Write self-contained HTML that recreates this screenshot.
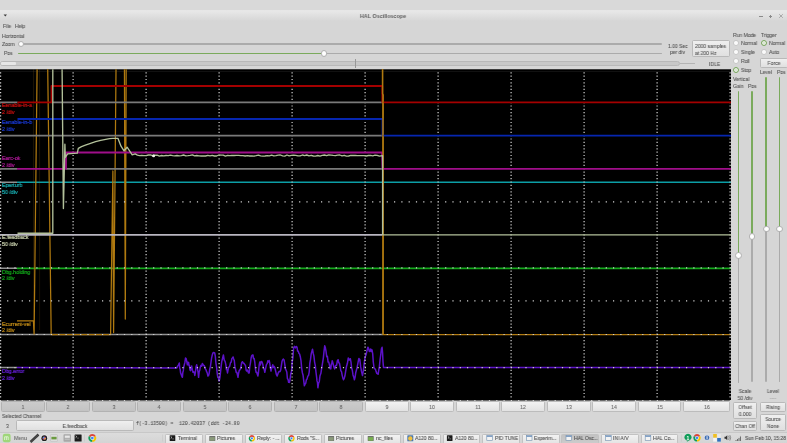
<!DOCTYPE html>
<html><head><meta charset="utf-8"><style>
*{margin:0;padding:0;box-sizing:border-box}
html,body{width:787px;height:443px;overflow:hidden;background:#d6d6d6;font-family:"Liberation Sans",sans-serif;color:#505050}
.r{position:absolute}
.t{position:absolute;white-space:nowrap;will-change:transform;-webkit-text-stroke:0.08px currentColor}
</style></head><body>
<div class="r" style="left:0.00px;top:0.00px;width:787.00px;height:9.70px;background:#d9d9d9"></div>
<div class="r" style="left:0.00px;top:9.70px;width:787.00px;height:11.30px;background:linear-gradient(#e6e6e6 0%,#e8e8e8 10%,#dedede 60%,#d6d6d6 100%)"></div>
<svg class="r" style="left:0;top:10px" width="12" height="10"><path d="M3.6,4.6 L7.0,4.6 L5.3,6.6 Z" fill="#383838"/></svg>
<div class="t" style="left:323.00px;width:120px;text-align:center;top:13.94px;font-size:5.83px;line-height:5.83px;color:#5e5e5e;font-weight:bold;font-family:'Liberation Sans';transform-origin:50% 50%;transform:scaleX(0.9259);-webkit-text-stroke:0">HAL Oscilloscope</div>
<div class="r" style="left:759.00px;top:16.30px;width:3.60px;height:0.60px;background:#8a8a8a"></div>
<div class="r" style="left:768.90px;top:16.30px;width:3.60px;height:0.60px;background:#8a8a8a"></div>
<div class="r" style="left:770.40px;top:14.60px;width:0.60px;height:3.90px;background:#8a8a8a"></div>
<svg class="r" style="left:778px;top:13.4px" width="6" height="6"><path d="M1.2,1.2L4.8,4.8M4.8,1.2L1.2,4.8" stroke="#8a8a8a" stroke-width="0.65"/></svg>
<div class="t" style="left:2.50px;top:24.00px;font-size:5.40px;line-height:5.40px;color:#525252;font-weight:normal;font-family:'Liberation Sans';transform-origin:0 50%;transform:scaleX(0.9259);">File</div>
<div class="t" style="left:15.00px;top:24.00px;font-size:5.40px;line-height:5.40px;color:#525252;font-weight:normal;font-family:'Liberation Sans';transform-origin:0 50%;transform:scaleX(0.9259);">Help</div>
<div class="t" style="left:2.00px;top:34.00px;font-size:5.40px;line-height:5.40px;color:#525252;font-weight:normal;font-family:'Liberation Sans';transform-origin:0 50%;transform:scaleX(0.9259);">Horizontal</div>
<div class="t" style="left:2.00px;top:42.00px;font-size:5.40px;line-height:5.40px;color:#525252;font-weight:normal;font-family:'Liberation Sans';transform-origin:0 50%;transform:scaleX(0.9259);">Zoom</div>
<div class="t" style="left:4.00px;top:51.00px;font-size:5.40px;line-height:5.40px;color:#525252;font-weight:normal;font-family:'Liberation Sans';transform-origin:0 50%;transform:scaleX(0.9259);">Pos</div>
<div class="r" style="left:20.00px;top:42.90px;width:641.70px;height:1.70px;background:#ababab;border-radius:1px"></div>
<div class="r" style="left:17.50px;top:40.50px;width:6.80px;height:6.80px;border-radius:50%;background:radial-gradient(circle at 50% 45%,#ffffff 40%,#ededed);border:0.7px solid #b4b4b4"></div>
<div class="r" style="left:18.00px;top:52.50px;width:306.00px;height:1.90px;background:#7aaa5c;border-radius:1px"></div>
<div class="r" style="left:324.00px;top:52.50px;width:337.70px;height:1.90px;background:#ababab;border-radius:1px"></div>
<div class="r" style="left:320.70px;top:50.00px;width:6.80px;height:6.80px;border-radius:50%;background:radial-gradient(circle at 50% 45%,#ffffff 40%,#ededed);border:0.7px solid #b4b4b4"></div>
<div class="t" style="left:667.80px;top:43.60px;font-size:5.40px;line-height:5.40px;color:#525252;font-weight:normal;font-family:'Liberation Sans';transform-origin:0 50%;transform:scaleX(0.9259);">1.00 Sec</div>
<div class="t" style="left:670.00px;top:50.30px;font-size:5.40px;line-height:5.40px;color:#525252;font-weight:normal;font-family:'Liberation Sans';transform-origin:0 50%;transform:scaleX(0.9259);">per div</div>
<div class="r" style="left:692.00px;top:40.00px;width:38.00px;height:17.30px;border:0.8px solid #b9b9b9;border-radius:1.5px;background:linear-gradient(#efefef,#e0e0e0);"></div>
<div class="t" style="left:695.00px;top:43.60px;font-size:5.40px;line-height:5.40px;color:#525252;font-weight:normal;font-family:'Liberation Sans';transform-origin:0 50%;transform:scaleX(0.9259);">2000 samples</div>
<div class="t" style="left:695.00px;top:50.50px;font-size:5.40px;line-height:5.40px;color:#525252;font-weight:normal;font-family:'Liberation Sans';transform-origin:0 50%;transform:scaleX(0.9259);">at 200 Hz</div>
<div class="r" style="left:0.00px;top:61.00px;width:680.00px;height:5.00px;border:0.7px solid #b8b8b8;border-radius:2.5px;background:#c8c8c8"></div>
<div class="r" style="left:1.20px;top:62.40px;width:14.80px;height:2.40px;background:#e6e6e6;border-radius:1px"></div>
<div class="r" style="left:680.00px;top:62.90px;width:15.00px;height:0.90px;background:#b4b4b4"></div>
<div class="r" style="left:355.30px;top:59.00px;width:0.80px;height:9.00px;background:#989898"></div>
<div class="t" style="left:709.00px;top:62.00px;font-size:5.40px;line-height:5.40px;color:#525252;font-weight:normal;font-family:'Liberation Sans';transform-origin:0 50%;transform:scaleX(0.9259);">IDLE</div>
<svg class="r" style="left:0;top:0" width="787" height="443" viewBox="0 0 787 443">
<defs><clipPath id="sc"><rect x="0" y="69.3" width="731" height="332"/></clipPath></defs>
<rect x="0" y="69.3" width="731" height="331.2" fill="#000"/>
<rect x="0" y="69.3" width="731" height="0.6" fill="#3a3a3a"/>
<rect x="0" y="71.2" width="731" height="0.5" fill="#222"/>
<g clip-path="url(#sc)">
<polyline points="0.0,334.6 383.0,334.6" fill="none" stroke="#909090" stroke-width="1.5" stroke-opacity="1" stroke-linejoin="round"/><polyline points="0.0,367.6 17.0,367.6" fill="none" stroke="#909090" stroke-width="1.5" stroke-opacity="1" stroke-linejoin="round"/><polyline points="0.0,182.3 17.0,182.3" fill="none" stroke="#909090" stroke-width="1.6" stroke-opacity="1" stroke-linejoin="round"/><polyline points="17.0,182.3 731.0,182.3" fill="none" stroke="#0c9ea6" stroke-width="1.6" stroke-opacity="1" stroke-linejoin="round"/><polyline points="0.0,268.3 17.0,268.3" fill="none" stroke="#909090" stroke-width="1.6" stroke-opacity="1" stroke-linejoin="round"/><polyline points="17.0,268.3 731.0,268.3" fill="none" stroke="#12a81a" stroke-width="1.7" stroke-opacity="1" stroke-linejoin="round"/><polyline points="17.0,320.8 33.4,320.8 34.1,334.0 34.6,290.0 37.2,60.0 47.6,60.0 51.2,334.6 110.6,334.6 112.9,171.0 113.6,332.6 116.1,60.0 124.4,60.0 125.3,319.0 126.2,60.0 382.5,60.0 382.5,93.7 383.2,95.0 383.2,334.6 731.0,334.6" fill="none" stroke="#b07a10" stroke-width="1.25" stroke-opacity="1" stroke-linejoin="round"/><polyline points="33.5,60.0 33.5,330.0" fill="none" stroke="#b07a10" stroke-width="0.8" stroke-opacity="0.2" stroke-linejoin="round"/><polyline points="39.6,60.0 39.6,330.0" fill="none" stroke="#b07a10" stroke-width="0.8" stroke-opacity="0.2" stroke-linejoin="round"/><polyline points="17.0,367.6 176.8,368.0 177.6,366.1 178.5,364.9 179.3,363.0 179.7,368.1 180.2,369.5 180.6,372.9 181.2,374.4 181.8,376.2 182.4,377.3 182.8,372.6 183.3,370.7 183.7,367.3 184.3,364.8 184.9,362.4 185.5,358.0 186.1,358.5 186.8,361.7 187.4,364.8 187.8,362.2 188.2,364.6 188.6,362.4 189.0,365.7 189.5,365.3 189.9,369.8 190.5,370.7 191.1,369.3 191.7,366.0 192.1,368.8 192.6,370.7 193.0,372.3 193.6,371.8 194.2,372.2 194.8,375.4 195.4,372.0 196.1,366.4 196.7,364.8 197.3,367.6 198.0,372.0 198.6,377.3 199.2,371.7 199.8,370.0 200.4,366.7 201.0,365.4 201.7,366.1 202.3,363.6 202.9,364.3 203.6,365.5 204.2,365.5 204.8,366.9 205.4,369.1 206.0,369.8 206.6,371.7 207.3,373.0 207.9,376.0 208.5,375.7 209.2,373.2 209.8,368.6 210.4,366.6 211.0,362.4 211.6,358.0 212.2,355.3 212.9,353.1 213.5,352.4 214.1,352.7 214.7,353.0 215.3,356.1 215.9,363.0 216.6,367.3 217.2,373.5 217.8,377.5 218.5,378.0 219.1,381.0 219.7,378.9 220.3,374.2 220.9,368.6 221.7,361.9 222.6,358.1 223.4,354.9 224.2,360.0 225.1,361.4 225.9,364.8 226.4,369.6 227.0,369.8 227.5,372.9 228.5,367.6 229.6,366.4 230.6,362.4 231.2,362.2 231.9,358.4 232.5,358.0 233.1,357.0 233.7,358.9 234.3,360.5 234.9,366.4 235.6,369.5 236.2,372.3 236.8,372.3 237.4,374.5 238.0,377.3 238.6,373.1 239.3,370.3 239.9,369.8 240.7,368.4 241.6,363.0 242.4,361.7 243.2,363.0 244.1,363.5 244.9,364.8 245.5,365.5 246.1,370.0 246.7,371.0 247.5,370.0 248.4,372.9 249.2,372.9 249.8,366.3 250.5,362.6 251.1,358.0 251.7,355.7 252.4,354.9 253.0,354.9 253.4,358.2 253.8,358.7 254.2,358.6 254.8,362.3 255.5,369.5 256.1,372.3 256.7,372.2 257.3,374.3 257.9,376.0 258.3,373.9 258.8,369.1 259.2,364.8 259.8,362.0 260.4,364.9 261.0,361.7 261.6,361.5 262.3,362.7 262.9,364.8 263.5,368.5 264.2,369.1 264.8,372.3 265.6,368.5 266.4,364.6 267.2,363.6 267.8,360.8 268.5,361.9 269.1,360.5 269.7,362.8 270.4,368.0 271.0,371.0 271.6,368.4 272.2,366.6 272.8,364.8 273.4,367.6 274.1,366.4 274.7,367.3 275.5,370.5 276.4,374.7 277.2,376.0 278.1,373.2 279.1,371.5 280.0,371.6 280.7,370.0 281.3,366.2 282.0,361.4 282.7,359.8 283.4,359.1 284.1,360.0 284.8,364.4 285.4,368.8 286.1,370.2 286.8,372.0 287.4,378.5 288.1,379.7 288.6,382.3 289.0,382.0 289.5,382.4 290.2,378.5 290.8,373.4 291.5,371.6 292.2,361.7 292.9,357.8 293.6,347.9 294.5,346.3 295.4,347.9 296.3,346.5 297.0,347.0 297.6,351.1 298.3,351.3 299.0,353.5 299.6,354.0 300.3,356.7 301.0,360.6 301.7,368.5 302.4,372.9 303.1,375.3 303.7,380.3 304.4,385.8 305.1,384.0 305.7,383.3 306.4,379.7 307.1,378.9 307.8,376.1 308.5,375.7 309.2,372.2 309.8,363.5 310.5,359.4 311.2,353.9 311.8,351.6 312.5,349.2 313.2,353.2 313.9,355.9 314.6,362.1 315.3,365.6 315.9,371.5 316.6,377.0 317.0,380.9 317.5,382.6 317.9,387.8 318.6,383.2 319.3,381.4 320.0,375.7 320.9,373.3 321.8,367.3 322.7,362.1 323.4,357.6 324.0,351.6 324.7,345.8 325.4,347.8 326.0,351.1 326.7,356.7 327.4,356.4 328.1,362.1 328.8,362.1 329.5,365.2 330.1,368.7 330.8,368.9 331.3,364.1 331.7,364.0 332.2,360.7 333.0,363.3 333.9,367.2 334.7,368.9 335.6,365.4 336.5,365.6 337.4,360.7 338.1,359.7 338.8,362.7 339.5,363.4 340.2,367.1 340.8,370.7 341.5,371.6 342.2,375.3 342.8,377.9 343.5,379.7 344.2,378.3 344.9,376.1 345.6,371.6 346.5,366.5 347.4,363.3 348.3,358.0 349.0,360.0 349.6,360.1 350.3,358.7 351.0,362.1 351.6,367.7 352.3,370.2 353.0,374.9 353.7,376.9 354.4,379.7 355.1,377.1 355.7,372.8 356.4,370.2 357.1,367.4 357.7,364.3 358.4,360.7 358.9,358.4 359.3,360.4 359.8,359.4 360.7,366.9 361.6,371.9 362.5,375.6 363.4,370.4 364.3,362.4 365.2,356.7 366.1,354.6 367.0,350.7 367.9,347.2 368.6,348.3 369.3,351.4 370.0,351.3 370.7,349.0 371.3,351.5 372.0,349.9 372.7,353.6 373.3,362.1 374.0,367.5 374.7,368.8 375.4,369.1 376.1,371.6 376.8,373.4 377.4,373.4 378.1,374.3 378.8,369.9 379.4,366.2 380.1,359.4 380.8,354.3 381.4,349.1 382.1,347.2 382.6,353.0 383.0,361.6 383.5,367.5 731.0,367.6" fill="none" stroke="#5c12c8" stroke-width="1.5" stroke-opacity="1" stroke-linejoin="round"/>
<path d="M0.0,72.3h1.2v1.2h-1.2z M0.0,75.6h1.2v1.2h-1.2z M0.0,78.9h1.2v1.2h-1.2z M0.0,82.2h1.2v1.2h-1.2z M0.0,85.5h1.2v1.2h-1.2z M0.0,88.8h1.2v1.2h-1.2z M0.0,92.1h1.2v1.2h-1.2z M0.0,95.4h1.2v1.2h-1.2z M0.0,98.7h1.2v1.2h-1.2z M0.0,102.1h1.2v1.2h-1.2z M0.0,105.4h1.2v1.2h-1.2z M0.0,108.7h1.2v1.2h-1.2z M0.0,112.0h1.2v1.2h-1.2z M0.0,115.3h1.2v1.2h-1.2z M0.0,118.6h1.2v1.2h-1.2z M0.0,121.9h1.2v1.2h-1.2z M0.0,125.2h1.2v1.2h-1.2z M0.0,128.5h1.2v1.2h-1.2z M0.0,131.8h1.2v1.2h-1.2z M0.0,135.1h1.2v1.2h-1.2z M0.0,138.4h1.2v1.2h-1.2z M0.0,141.7h1.2v1.2h-1.2z M0.0,145.0h1.2v1.2h-1.2z M0.0,148.3h1.2v1.2h-1.2z M0.0,151.6h1.2v1.2h-1.2z M0.0,154.9h1.2v1.2h-1.2z M0.0,158.2h1.2v1.2h-1.2z M0.0,161.5h1.2v1.2h-1.2z M0.0,164.8h1.2v1.2h-1.2z M0.0,168.2h1.2v1.2h-1.2z M0.0,171.5h1.2v1.2h-1.2z M0.0,174.8h1.2v1.2h-1.2z M0.0,178.1h1.2v1.2h-1.2z M0.0,181.4h1.2v1.2h-1.2z M0.0,184.7h1.2v1.2h-1.2z M0.0,188.0h1.2v1.2h-1.2z M0.0,191.3h1.2v1.2h-1.2z M0.0,194.6h1.2v1.2h-1.2z M0.0,197.9h1.2v1.2h-1.2z M0.0,201.2h1.2v1.2h-1.2z M0.0,204.5h1.2v1.2h-1.2z M0.0,207.8h1.2v1.2h-1.2z M0.0,211.1h1.2v1.2h-1.2z M0.0,214.4h1.2v1.2h-1.2z M0.0,217.7h1.2v1.2h-1.2z M0.0,221.0h1.2v1.2h-1.2z M0.0,224.3h1.2v1.2h-1.2z M0.0,227.6h1.2v1.2h-1.2z M0.0,230.9h1.2v1.2h-1.2z M0.0,234.2h1.2v1.2h-1.2z M0.0,237.6h1.2v1.2h-1.2z M0.0,240.9h1.2v1.2h-1.2z M0.0,244.2h1.2v1.2h-1.2z M0.0,247.5h1.2v1.2h-1.2z M0.0,250.8h1.2v1.2h-1.2z M0.0,254.1h1.2v1.2h-1.2z M0.0,257.4h1.2v1.2h-1.2z M0.0,260.7h1.2v1.2h-1.2z M0.0,264.0h1.2v1.2h-1.2z M0.0,267.3h1.2v1.2h-1.2z M0.0,270.6h1.2v1.2h-1.2z M0.0,273.9h1.2v1.2h-1.2z M0.0,277.2h1.2v1.2h-1.2z M0.0,280.5h1.2v1.2h-1.2z M0.0,283.8h1.2v1.2h-1.2z M0.0,287.1h1.2v1.2h-1.2z M0.0,290.4h1.2v1.2h-1.2z M0.0,293.7h1.2v1.2h-1.2z M0.0,297.0h1.2v1.2h-1.2z M0.0,300.4h1.2v1.2h-1.2z M0.0,303.7h1.2v1.2h-1.2z M0.0,307.0h1.2v1.2h-1.2z M0.0,310.3h1.2v1.2h-1.2z M0.0,313.6h1.2v1.2h-1.2z M0.0,316.9h1.2v1.2h-1.2z M0.0,320.2h1.2v1.2h-1.2z M0.0,323.5h1.2v1.2h-1.2z M0.0,326.8h1.2v1.2h-1.2z M0.0,330.1h1.2v1.2h-1.2z M0.0,333.4h1.2v1.2h-1.2z M0.0,336.7h1.2v1.2h-1.2z M0.0,340.0h1.2v1.2h-1.2z M0.0,343.3h1.2v1.2h-1.2z M0.0,346.6h1.2v1.2h-1.2z M0.0,349.9h1.2v1.2h-1.2z M0.0,353.2h1.2v1.2h-1.2z M0.0,356.5h1.2v1.2h-1.2z M0.0,359.8h1.2v1.2h-1.2z M0.0,363.1h1.2v1.2h-1.2z M0.0,366.4h1.2v1.2h-1.2z M0.0,369.8h1.2v1.2h-1.2z M0.0,373.1h1.2v1.2h-1.2z M0.0,376.4h1.2v1.2h-1.2z M0.0,379.7h1.2v1.2h-1.2z M0.0,383.0h1.2v1.2h-1.2z M0.0,386.3h1.2v1.2h-1.2z M0.0,389.6h1.2v1.2h-1.2z M0.0,392.9h1.2v1.2h-1.2z M0.0,396.2h1.2v1.2h-1.2z M72.5,72.3h1.2v1.2h-1.2z M72.5,75.6h1.2v1.2h-1.2z M72.5,78.9h1.2v1.2h-1.2z M72.5,82.2h1.2v1.2h-1.2z M72.5,85.5h1.2v1.2h-1.2z M72.5,88.8h1.2v1.2h-1.2z M72.5,92.1h1.2v1.2h-1.2z M72.5,95.4h1.2v1.2h-1.2z M72.5,98.7h1.2v1.2h-1.2z M72.5,102.1h1.2v1.2h-1.2z M72.5,105.4h1.2v1.2h-1.2z M72.5,108.7h1.2v1.2h-1.2z M72.5,112.0h1.2v1.2h-1.2z M72.5,115.3h1.2v1.2h-1.2z M72.5,118.6h1.2v1.2h-1.2z M72.5,121.9h1.2v1.2h-1.2z M72.5,125.2h1.2v1.2h-1.2z M72.5,128.5h1.2v1.2h-1.2z M72.5,131.8h1.2v1.2h-1.2z M72.5,135.1h1.2v1.2h-1.2z M72.5,138.4h1.2v1.2h-1.2z M72.5,141.7h1.2v1.2h-1.2z M72.5,145.0h1.2v1.2h-1.2z M72.5,148.3h1.2v1.2h-1.2z M72.5,151.6h1.2v1.2h-1.2z M72.5,154.9h1.2v1.2h-1.2z M72.5,158.2h1.2v1.2h-1.2z M72.5,161.5h1.2v1.2h-1.2z M72.5,164.8h1.2v1.2h-1.2z M72.5,168.2h1.2v1.2h-1.2z M72.5,171.5h1.2v1.2h-1.2z M72.5,174.8h1.2v1.2h-1.2z M72.5,178.1h1.2v1.2h-1.2z M72.5,181.4h1.2v1.2h-1.2z M72.5,184.7h1.2v1.2h-1.2z M72.5,188.0h1.2v1.2h-1.2z M72.5,191.3h1.2v1.2h-1.2z M72.5,194.6h1.2v1.2h-1.2z M72.5,197.9h1.2v1.2h-1.2z M72.5,201.2h1.2v1.2h-1.2z M72.5,204.5h1.2v1.2h-1.2z M72.5,207.8h1.2v1.2h-1.2z M72.5,211.1h1.2v1.2h-1.2z M72.5,214.4h1.2v1.2h-1.2z M72.5,217.7h1.2v1.2h-1.2z M72.5,221.0h1.2v1.2h-1.2z M72.5,224.3h1.2v1.2h-1.2z M72.5,227.6h1.2v1.2h-1.2z M72.5,230.9h1.2v1.2h-1.2z M72.5,234.2h1.2v1.2h-1.2z M72.5,237.6h1.2v1.2h-1.2z M72.5,240.9h1.2v1.2h-1.2z M72.5,244.2h1.2v1.2h-1.2z M72.5,247.5h1.2v1.2h-1.2z M72.5,250.8h1.2v1.2h-1.2z M72.5,254.1h1.2v1.2h-1.2z M72.5,257.4h1.2v1.2h-1.2z M72.5,260.7h1.2v1.2h-1.2z M72.5,264.0h1.2v1.2h-1.2z M72.5,267.3h1.2v1.2h-1.2z M72.5,270.6h1.2v1.2h-1.2z M72.5,273.9h1.2v1.2h-1.2z M72.5,277.2h1.2v1.2h-1.2z M72.5,280.5h1.2v1.2h-1.2z M72.5,283.8h1.2v1.2h-1.2z M72.5,287.1h1.2v1.2h-1.2z M72.5,290.4h1.2v1.2h-1.2z M72.5,293.7h1.2v1.2h-1.2z M72.5,297.0h1.2v1.2h-1.2z M72.5,300.4h1.2v1.2h-1.2z M72.5,303.7h1.2v1.2h-1.2z M72.5,307.0h1.2v1.2h-1.2z M72.5,310.3h1.2v1.2h-1.2z M72.5,313.6h1.2v1.2h-1.2z M72.5,316.9h1.2v1.2h-1.2z M72.5,320.2h1.2v1.2h-1.2z M72.5,323.5h1.2v1.2h-1.2z M72.5,326.8h1.2v1.2h-1.2z M72.5,330.1h1.2v1.2h-1.2z M72.5,333.4h1.2v1.2h-1.2z M72.5,336.7h1.2v1.2h-1.2z M72.5,340.0h1.2v1.2h-1.2z M72.5,343.3h1.2v1.2h-1.2z M72.5,346.6h1.2v1.2h-1.2z M72.5,349.9h1.2v1.2h-1.2z M72.5,353.2h1.2v1.2h-1.2z M72.5,356.5h1.2v1.2h-1.2z M72.5,359.8h1.2v1.2h-1.2z M72.5,363.1h1.2v1.2h-1.2z M72.5,366.4h1.2v1.2h-1.2z M72.5,369.8h1.2v1.2h-1.2z M72.5,373.1h1.2v1.2h-1.2z M72.5,376.4h1.2v1.2h-1.2z M72.5,379.7h1.2v1.2h-1.2z M72.5,383.0h1.2v1.2h-1.2z M72.5,386.3h1.2v1.2h-1.2z M72.5,389.6h1.2v1.2h-1.2z M72.5,392.9h1.2v1.2h-1.2z M72.5,396.2h1.2v1.2h-1.2z M145.5,72.3h1.2v1.2h-1.2z M145.5,75.6h1.2v1.2h-1.2z M145.5,78.9h1.2v1.2h-1.2z M145.5,82.2h1.2v1.2h-1.2z M145.5,85.5h1.2v1.2h-1.2z M145.5,88.8h1.2v1.2h-1.2z M145.5,92.1h1.2v1.2h-1.2z M145.5,95.4h1.2v1.2h-1.2z M145.5,98.7h1.2v1.2h-1.2z M145.5,102.1h1.2v1.2h-1.2z M145.5,105.4h1.2v1.2h-1.2z M145.5,108.7h1.2v1.2h-1.2z M145.5,112.0h1.2v1.2h-1.2z M145.5,115.3h1.2v1.2h-1.2z M145.5,118.6h1.2v1.2h-1.2z M145.5,121.9h1.2v1.2h-1.2z M145.5,125.2h1.2v1.2h-1.2z M145.5,128.5h1.2v1.2h-1.2z M145.5,131.8h1.2v1.2h-1.2z M145.5,135.1h1.2v1.2h-1.2z M145.5,138.4h1.2v1.2h-1.2z M145.5,141.7h1.2v1.2h-1.2z M145.5,145.0h1.2v1.2h-1.2z M145.5,148.3h1.2v1.2h-1.2z M145.5,151.6h1.2v1.2h-1.2z M145.5,154.9h1.2v1.2h-1.2z M145.5,158.2h1.2v1.2h-1.2z M145.5,161.5h1.2v1.2h-1.2z M145.5,164.8h1.2v1.2h-1.2z M145.5,168.2h1.2v1.2h-1.2z M145.5,171.5h1.2v1.2h-1.2z M145.5,174.8h1.2v1.2h-1.2z M145.5,178.1h1.2v1.2h-1.2z M145.5,181.4h1.2v1.2h-1.2z M145.5,184.7h1.2v1.2h-1.2z M145.5,188.0h1.2v1.2h-1.2z M145.5,191.3h1.2v1.2h-1.2z M145.5,194.6h1.2v1.2h-1.2z M145.5,197.9h1.2v1.2h-1.2z M145.5,201.2h1.2v1.2h-1.2z M145.5,204.5h1.2v1.2h-1.2z M145.5,207.8h1.2v1.2h-1.2z M145.5,211.1h1.2v1.2h-1.2z M145.5,214.4h1.2v1.2h-1.2z M145.5,217.7h1.2v1.2h-1.2z M145.5,221.0h1.2v1.2h-1.2z M145.5,224.3h1.2v1.2h-1.2z M145.5,227.6h1.2v1.2h-1.2z M145.5,230.9h1.2v1.2h-1.2z M145.5,234.2h1.2v1.2h-1.2z M145.5,237.6h1.2v1.2h-1.2z M145.5,240.9h1.2v1.2h-1.2z M145.5,244.2h1.2v1.2h-1.2z M145.5,247.5h1.2v1.2h-1.2z M145.5,250.8h1.2v1.2h-1.2z M145.5,254.1h1.2v1.2h-1.2z M145.5,257.4h1.2v1.2h-1.2z M145.5,260.7h1.2v1.2h-1.2z M145.5,264.0h1.2v1.2h-1.2z M145.5,267.3h1.2v1.2h-1.2z M145.5,270.6h1.2v1.2h-1.2z M145.5,273.9h1.2v1.2h-1.2z M145.5,277.2h1.2v1.2h-1.2z M145.5,280.5h1.2v1.2h-1.2z M145.5,283.8h1.2v1.2h-1.2z M145.5,287.1h1.2v1.2h-1.2z M145.5,290.4h1.2v1.2h-1.2z M145.5,293.7h1.2v1.2h-1.2z M145.5,297.0h1.2v1.2h-1.2z M145.5,300.4h1.2v1.2h-1.2z M145.5,303.7h1.2v1.2h-1.2z M145.5,307.0h1.2v1.2h-1.2z M145.5,310.3h1.2v1.2h-1.2z M145.5,313.6h1.2v1.2h-1.2z M145.5,316.9h1.2v1.2h-1.2z M145.5,320.2h1.2v1.2h-1.2z M145.5,323.5h1.2v1.2h-1.2z M145.5,326.8h1.2v1.2h-1.2z M145.5,330.1h1.2v1.2h-1.2z M145.5,333.4h1.2v1.2h-1.2z M145.5,336.7h1.2v1.2h-1.2z M145.5,340.0h1.2v1.2h-1.2z M145.5,343.3h1.2v1.2h-1.2z M145.5,346.6h1.2v1.2h-1.2z M145.5,349.9h1.2v1.2h-1.2z M145.5,353.2h1.2v1.2h-1.2z M145.5,356.5h1.2v1.2h-1.2z M145.5,359.8h1.2v1.2h-1.2z M145.5,363.1h1.2v1.2h-1.2z M145.5,366.4h1.2v1.2h-1.2z M145.5,369.8h1.2v1.2h-1.2z M145.5,373.1h1.2v1.2h-1.2z M145.5,376.4h1.2v1.2h-1.2z M145.5,379.7h1.2v1.2h-1.2z M145.5,383.0h1.2v1.2h-1.2z M145.5,386.3h1.2v1.2h-1.2z M145.5,389.6h1.2v1.2h-1.2z M145.5,392.9h1.2v1.2h-1.2z M145.5,396.2h1.2v1.2h-1.2z M218.5,72.3h1.2v1.2h-1.2z M218.5,75.6h1.2v1.2h-1.2z M218.5,78.9h1.2v1.2h-1.2z M218.5,82.2h1.2v1.2h-1.2z M218.5,85.5h1.2v1.2h-1.2z M218.5,88.8h1.2v1.2h-1.2z M218.5,92.1h1.2v1.2h-1.2z M218.5,95.4h1.2v1.2h-1.2z M218.5,98.7h1.2v1.2h-1.2z M218.5,102.1h1.2v1.2h-1.2z M218.5,105.4h1.2v1.2h-1.2z M218.5,108.7h1.2v1.2h-1.2z M218.5,112.0h1.2v1.2h-1.2z M218.5,115.3h1.2v1.2h-1.2z M218.5,118.6h1.2v1.2h-1.2z M218.5,121.9h1.2v1.2h-1.2z M218.5,125.2h1.2v1.2h-1.2z M218.5,128.5h1.2v1.2h-1.2z M218.5,131.8h1.2v1.2h-1.2z M218.5,135.1h1.2v1.2h-1.2z M218.5,138.4h1.2v1.2h-1.2z M218.5,141.7h1.2v1.2h-1.2z M218.5,145.0h1.2v1.2h-1.2z M218.5,148.3h1.2v1.2h-1.2z M218.5,151.6h1.2v1.2h-1.2z M218.5,154.9h1.2v1.2h-1.2z M218.5,158.2h1.2v1.2h-1.2z M218.5,161.5h1.2v1.2h-1.2z M218.5,164.8h1.2v1.2h-1.2z M218.5,168.2h1.2v1.2h-1.2z M218.5,171.5h1.2v1.2h-1.2z M218.5,174.8h1.2v1.2h-1.2z M218.5,178.1h1.2v1.2h-1.2z M218.5,181.4h1.2v1.2h-1.2z M218.5,184.7h1.2v1.2h-1.2z M218.5,188.0h1.2v1.2h-1.2z M218.5,191.3h1.2v1.2h-1.2z M218.5,194.6h1.2v1.2h-1.2z M218.5,197.9h1.2v1.2h-1.2z M218.5,201.2h1.2v1.2h-1.2z M218.5,204.5h1.2v1.2h-1.2z M218.5,207.8h1.2v1.2h-1.2z M218.5,211.1h1.2v1.2h-1.2z M218.5,214.4h1.2v1.2h-1.2z M218.5,217.7h1.2v1.2h-1.2z M218.5,221.0h1.2v1.2h-1.2z M218.5,224.3h1.2v1.2h-1.2z M218.5,227.6h1.2v1.2h-1.2z M218.5,230.9h1.2v1.2h-1.2z M218.5,234.2h1.2v1.2h-1.2z M218.5,237.6h1.2v1.2h-1.2z M218.5,240.9h1.2v1.2h-1.2z M218.5,244.2h1.2v1.2h-1.2z M218.5,247.5h1.2v1.2h-1.2z M218.5,250.8h1.2v1.2h-1.2z M218.5,254.1h1.2v1.2h-1.2z M218.5,257.4h1.2v1.2h-1.2z M218.5,260.7h1.2v1.2h-1.2z M218.5,264.0h1.2v1.2h-1.2z M218.5,267.3h1.2v1.2h-1.2z M218.5,270.6h1.2v1.2h-1.2z M218.5,273.9h1.2v1.2h-1.2z M218.5,277.2h1.2v1.2h-1.2z M218.5,280.5h1.2v1.2h-1.2z M218.5,283.8h1.2v1.2h-1.2z M218.5,287.1h1.2v1.2h-1.2z M218.5,290.4h1.2v1.2h-1.2z M218.5,293.7h1.2v1.2h-1.2z M218.5,297.0h1.2v1.2h-1.2z M218.5,300.4h1.2v1.2h-1.2z M218.5,303.7h1.2v1.2h-1.2z M218.5,307.0h1.2v1.2h-1.2z M218.5,310.3h1.2v1.2h-1.2z M218.5,313.6h1.2v1.2h-1.2z M218.5,316.9h1.2v1.2h-1.2z M218.5,320.2h1.2v1.2h-1.2z M218.5,323.5h1.2v1.2h-1.2z M218.5,326.8h1.2v1.2h-1.2z M218.5,330.1h1.2v1.2h-1.2z M218.5,333.4h1.2v1.2h-1.2z M218.5,336.7h1.2v1.2h-1.2z M218.5,340.0h1.2v1.2h-1.2z M218.5,343.3h1.2v1.2h-1.2z M218.5,346.6h1.2v1.2h-1.2z M218.5,349.9h1.2v1.2h-1.2z M218.5,353.2h1.2v1.2h-1.2z M218.5,356.5h1.2v1.2h-1.2z M218.5,359.8h1.2v1.2h-1.2z M218.5,363.1h1.2v1.2h-1.2z M218.5,366.4h1.2v1.2h-1.2z M218.5,369.8h1.2v1.2h-1.2z M218.5,373.1h1.2v1.2h-1.2z M218.5,376.4h1.2v1.2h-1.2z M218.5,379.7h1.2v1.2h-1.2z M218.5,383.0h1.2v1.2h-1.2z M218.5,386.3h1.2v1.2h-1.2z M218.5,389.6h1.2v1.2h-1.2z M218.5,392.9h1.2v1.2h-1.2z M218.5,396.2h1.2v1.2h-1.2z M291.5,72.3h1.2v1.2h-1.2z M291.5,75.6h1.2v1.2h-1.2z M291.5,78.9h1.2v1.2h-1.2z M291.5,82.2h1.2v1.2h-1.2z M291.5,85.5h1.2v1.2h-1.2z M291.5,88.8h1.2v1.2h-1.2z M291.5,92.1h1.2v1.2h-1.2z M291.5,95.4h1.2v1.2h-1.2z M291.5,98.7h1.2v1.2h-1.2z M291.5,102.1h1.2v1.2h-1.2z M291.5,105.4h1.2v1.2h-1.2z M291.5,108.7h1.2v1.2h-1.2z M291.5,112.0h1.2v1.2h-1.2z M291.5,115.3h1.2v1.2h-1.2z M291.5,118.6h1.2v1.2h-1.2z M291.5,121.9h1.2v1.2h-1.2z M291.5,125.2h1.2v1.2h-1.2z M291.5,128.5h1.2v1.2h-1.2z M291.5,131.8h1.2v1.2h-1.2z M291.5,135.1h1.2v1.2h-1.2z M291.5,138.4h1.2v1.2h-1.2z M291.5,141.7h1.2v1.2h-1.2z M291.5,145.0h1.2v1.2h-1.2z M291.5,148.3h1.2v1.2h-1.2z M291.5,151.6h1.2v1.2h-1.2z M291.5,154.9h1.2v1.2h-1.2z M291.5,158.2h1.2v1.2h-1.2z M291.5,161.5h1.2v1.2h-1.2z M291.5,164.8h1.2v1.2h-1.2z M291.5,168.2h1.2v1.2h-1.2z M291.5,171.5h1.2v1.2h-1.2z M291.5,174.8h1.2v1.2h-1.2z M291.5,178.1h1.2v1.2h-1.2z M291.5,181.4h1.2v1.2h-1.2z M291.5,184.7h1.2v1.2h-1.2z M291.5,188.0h1.2v1.2h-1.2z M291.5,191.3h1.2v1.2h-1.2z M291.5,194.6h1.2v1.2h-1.2z M291.5,197.9h1.2v1.2h-1.2z M291.5,201.2h1.2v1.2h-1.2z M291.5,204.5h1.2v1.2h-1.2z M291.5,207.8h1.2v1.2h-1.2z M291.5,211.1h1.2v1.2h-1.2z M291.5,214.4h1.2v1.2h-1.2z M291.5,217.7h1.2v1.2h-1.2z M291.5,221.0h1.2v1.2h-1.2z M291.5,224.3h1.2v1.2h-1.2z M291.5,227.6h1.2v1.2h-1.2z M291.5,230.9h1.2v1.2h-1.2z M291.5,234.2h1.2v1.2h-1.2z M291.5,237.6h1.2v1.2h-1.2z M291.5,240.9h1.2v1.2h-1.2z M291.5,244.2h1.2v1.2h-1.2z M291.5,247.5h1.2v1.2h-1.2z M291.5,250.8h1.2v1.2h-1.2z M291.5,254.1h1.2v1.2h-1.2z M291.5,257.4h1.2v1.2h-1.2z M291.5,260.7h1.2v1.2h-1.2z M291.5,264.0h1.2v1.2h-1.2z M291.5,267.3h1.2v1.2h-1.2z M291.5,270.6h1.2v1.2h-1.2z M291.5,273.9h1.2v1.2h-1.2z M291.5,277.2h1.2v1.2h-1.2z M291.5,280.5h1.2v1.2h-1.2z M291.5,283.8h1.2v1.2h-1.2z M291.5,287.1h1.2v1.2h-1.2z M291.5,290.4h1.2v1.2h-1.2z M291.5,293.7h1.2v1.2h-1.2z M291.5,297.0h1.2v1.2h-1.2z M291.5,300.4h1.2v1.2h-1.2z M291.5,303.7h1.2v1.2h-1.2z M291.5,307.0h1.2v1.2h-1.2z M291.5,310.3h1.2v1.2h-1.2z M291.5,313.6h1.2v1.2h-1.2z M291.5,316.9h1.2v1.2h-1.2z M291.5,320.2h1.2v1.2h-1.2z M291.5,323.5h1.2v1.2h-1.2z M291.5,326.8h1.2v1.2h-1.2z M291.5,330.1h1.2v1.2h-1.2z M291.5,333.4h1.2v1.2h-1.2z M291.5,336.7h1.2v1.2h-1.2z M291.5,340.0h1.2v1.2h-1.2z M291.5,343.3h1.2v1.2h-1.2z M291.5,346.6h1.2v1.2h-1.2z M291.5,349.9h1.2v1.2h-1.2z M291.5,353.2h1.2v1.2h-1.2z M291.5,356.5h1.2v1.2h-1.2z M291.5,359.8h1.2v1.2h-1.2z M291.5,363.1h1.2v1.2h-1.2z M291.5,366.4h1.2v1.2h-1.2z M291.5,369.8h1.2v1.2h-1.2z M291.5,373.1h1.2v1.2h-1.2z M291.5,376.4h1.2v1.2h-1.2z M291.5,379.7h1.2v1.2h-1.2z M291.5,383.0h1.2v1.2h-1.2z M291.5,386.3h1.2v1.2h-1.2z M291.5,389.6h1.2v1.2h-1.2z M291.5,392.9h1.2v1.2h-1.2z M291.5,396.2h1.2v1.2h-1.2z M364.5,72.3h1.2v1.2h-1.2z M364.5,75.6h1.2v1.2h-1.2z M364.5,78.9h1.2v1.2h-1.2z M364.5,82.2h1.2v1.2h-1.2z M364.5,85.5h1.2v1.2h-1.2z M364.5,88.8h1.2v1.2h-1.2z M364.5,92.1h1.2v1.2h-1.2z M364.5,95.4h1.2v1.2h-1.2z M364.5,98.7h1.2v1.2h-1.2z M364.5,102.1h1.2v1.2h-1.2z M364.5,105.4h1.2v1.2h-1.2z M364.5,108.7h1.2v1.2h-1.2z M364.5,112.0h1.2v1.2h-1.2z M364.5,115.3h1.2v1.2h-1.2z M364.5,118.6h1.2v1.2h-1.2z M364.5,121.9h1.2v1.2h-1.2z M364.5,125.2h1.2v1.2h-1.2z M364.5,128.5h1.2v1.2h-1.2z M364.5,131.8h1.2v1.2h-1.2z M364.5,135.1h1.2v1.2h-1.2z M364.5,138.4h1.2v1.2h-1.2z M364.5,141.7h1.2v1.2h-1.2z M364.5,145.0h1.2v1.2h-1.2z M364.5,148.3h1.2v1.2h-1.2z M364.5,151.6h1.2v1.2h-1.2z M364.5,154.9h1.2v1.2h-1.2z M364.5,158.2h1.2v1.2h-1.2z M364.5,161.5h1.2v1.2h-1.2z M364.5,164.8h1.2v1.2h-1.2z M364.5,168.2h1.2v1.2h-1.2z M364.5,171.5h1.2v1.2h-1.2z M364.5,174.8h1.2v1.2h-1.2z M364.5,178.1h1.2v1.2h-1.2z M364.5,181.4h1.2v1.2h-1.2z M364.5,184.7h1.2v1.2h-1.2z M364.5,188.0h1.2v1.2h-1.2z M364.5,191.3h1.2v1.2h-1.2z M364.5,194.6h1.2v1.2h-1.2z M364.5,197.9h1.2v1.2h-1.2z M364.5,201.2h1.2v1.2h-1.2z M364.5,204.5h1.2v1.2h-1.2z M364.5,207.8h1.2v1.2h-1.2z M364.5,211.1h1.2v1.2h-1.2z M364.5,214.4h1.2v1.2h-1.2z M364.5,217.7h1.2v1.2h-1.2z M364.5,221.0h1.2v1.2h-1.2z M364.5,224.3h1.2v1.2h-1.2z M364.5,227.6h1.2v1.2h-1.2z M364.5,230.9h1.2v1.2h-1.2z M364.5,234.2h1.2v1.2h-1.2z M364.5,237.6h1.2v1.2h-1.2z M364.5,240.9h1.2v1.2h-1.2z M364.5,244.2h1.2v1.2h-1.2z M364.5,247.5h1.2v1.2h-1.2z M364.5,250.8h1.2v1.2h-1.2z M364.5,254.1h1.2v1.2h-1.2z M364.5,257.4h1.2v1.2h-1.2z M364.5,260.7h1.2v1.2h-1.2z M364.5,264.0h1.2v1.2h-1.2z M364.5,267.3h1.2v1.2h-1.2z M364.5,270.6h1.2v1.2h-1.2z M364.5,273.9h1.2v1.2h-1.2z M364.5,277.2h1.2v1.2h-1.2z M364.5,280.5h1.2v1.2h-1.2z M364.5,283.8h1.2v1.2h-1.2z M364.5,287.1h1.2v1.2h-1.2z M364.5,290.4h1.2v1.2h-1.2z M364.5,293.7h1.2v1.2h-1.2z M364.5,297.0h1.2v1.2h-1.2z M364.5,300.4h1.2v1.2h-1.2z M364.5,303.7h1.2v1.2h-1.2z M364.5,307.0h1.2v1.2h-1.2z M364.5,310.3h1.2v1.2h-1.2z M364.5,313.6h1.2v1.2h-1.2z M364.5,316.9h1.2v1.2h-1.2z M364.5,320.2h1.2v1.2h-1.2z M364.5,323.5h1.2v1.2h-1.2z M364.5,326.8h1.2v1.2h-1.2z M364.5,330.1h1.2v1.2h-1.2z M364.5,333.4h1.2v1.2h-1.2z M364.5,336.7h1.2v1.2h-1.2z M364.5,340.0h1.2v1.2h-1.2z M364.5,343.3h1.2v1.2h-1.2z M364.5,346.6h1.2v1.2h-1.2z M364.5,349.9h1.2v1.2h-1.2z M364.5,353.2h1.2v1.2h-1.2z M364.5,356.5h1.2v1.2h-1.2z M364.5,359.8h1.2v1.2h-1.2z M364.5,363.1h1.2v1.2h-1.2z M364.5,366.4h1.2v1.2h-1.2z M364.5,369.8h1.2v1.2h-1.2z M364.5,373.1h1.2v1.2h-1.2z M364.5,376.4h1.2v1.2h-1.2z M364.5,379.7h1.2v1.2h-1.2z M364.5,383.0h1.2v1.2h-1.2z M364.5,386.3h1.2v1.2h-1.2z M364.5,389.6h1.2v1.2h-1.2z M364.5,392.9h1.2v1.2h-1.2z M364.5,396.2h1.2v1.2h-1.2z M437.5,72.3h1.2v1.2h-1.2z M437.5,75.6h1.2v1.2h-1.2z M437.5,78.9h1.2v1.2h-1.2z M437.5,82.2h1.2v1.2h-1.2z M437.5,85.5h1.2v1.2h-1.2z M437.5,88.8h1.2v1.2h-1.2z M437.5,92.1h1.2v1.2h-1.2z M437.5,95.4h1.2v1.2h-1.2z M437.5,98.7h1.2v1.2h-1.2z M437.5,102.1h1.2v1.2h-1.2z M437.5,105.4h1.2v1.2h-1.2z M437.5,108.7h1.2v1.2h-1.2z M437.5,112.0h1.2v1.2h-1.2z M437.5,115.3h1.2v1.2h-1.2z M437.5,118.6h1.2v1.2h-1.2z M437.5,121.9h1.2v1.2h-1.2z M437.5,125.2h1.2v1.2h-1.2z M437.5,128.5h1.2v1.2h-1.2z M437.5,131.8h1.2v1.2h-1.2z M437.5,135.1h1.2v1.2h-1.2z M437.5,138.4h1.2v1.2h-1.2z M437.5,141.7h1.2v1.2h-1.2z M437.5,145.0h1.2v1.2h-1.2z M437.5,148.3h1.2v1.2h-1.2z M437.5,151.6h1.2v1.2h-1.2z M437.5,154.9h1.2v1.2h-1.2z M437.5,158.2h1.2v1.2h-1.2z M437.5,161.5h1.2v1.2h-1.2z M437.5,164.8h1.2v1.2h-1.2z M437.5,168.2h1.2v1.2h-1.2z M437.5,171.5h1.2v1.2h-1.2z M437.5,174.8h1.2v1.2h-1.2z M437.5,178.1h1.2v1.2h-1.2z M437.5,181.4h1.2v1.2h-1.2z M437.5,184.7h1.2v1.2h-1.2z M437.5,188.0h1.2v1.2h-1.2z M437.5,191.3h1.2v1.2h-1.2z M437.5,194.6h1.2v1.2h-1.2z M437.5,197.9h1.2v1.2h-1.2z M437.5,201.2h1.2v1.2h-1.2z M437.5,204.5h1.2v1.2h-1.2z M437.5,207.8h1.2v1.2h-1.2z M437.5,211.1h1.2v1.2h-1.2z M437.5,214.4h1.2v1.2h-1.2z M437.5,217.7h1.2v1.2h-1.2z M437.5,221.0h1.2v1.2h-1.2z M437.5,224.3h1.2v1.2h-1.2z M437.5,227.6h1.2v1.2h-1.2z M437.5,230.9h1.2v1.2h-1.2z M437.5,234.2h1.2v1.2h-1.2z M437.5,237.6h1.2v1.2h-1.2z M437.5,240.9h1.2v1.2h-1.2z M437.5,244.2h1.2v1.2h-1.2z M437.5,247.5h1.2v1.2h-1.2z M437.5,250.8h1.2v1.2h-1.2z M437.5,254.1h1.2v1.2h-1.2z M437.5,257.4h1.2v1.2h-1.2z M437.5,260.7h1.2v1.2h-1.2z M437.5,264.0h1.2v1.2h-1.2z M437.5,267.3h1.2v1.2h-1.2z M437.5,270.6h1.2v1.2h-1.2z M437.5,273.9h1.2v1.2h-1.2z M437.5,277.2h1.2v1.2h-1.2z M437.5,280.5h1.2v1.2h-1.2z M437.5,283.8h1.2v1.2h-1.2z M437.5,287.1h1.2v1.2h-1.2z M437.5,290.4h1.2v1.2h-1.2z M437.5,293.7h1.2v1.2h-1.2z M437.5,297.0h1.2v1.2h-1.2z M437.5,300.4h1.2v1.2h-1.2z M437.5,303.7h1.2v1.2h-1.2z M437.5,307.0h1.2v1.2h-1.2z M437.5,310.3h1.2v1.2h-1.2z M437.5,313.6h1.2v1.2h-1.2z M437.5,316.9h1.2v1.2h-1.2z M437.5,320.2h1.2v1.2h-1.2z M437.5,323.5h1.2v1.2h-1.2z M437.5,326.8h1.2v1.2h-1.2z M437.5,330.1h1.2v1.2h-1.2z M437.5,333.4h1.2v1.2h-1.2z M437.5,336.7h1.2v1.2h-1.2z M437.5,340.0h1.2v1.2h-1.2z M437.5,343.3h1.2v1.2h-1.2z M437.5,346.6h1.2v1.2h-1.2z M437.5,349.9h1.2v1.2h-1.2z M437.5,353.2h1.2v1.2h-1.2z M437.5,356.5h1.2v1.2h-1.2z M437.5,359.8h1.2v1.2h-1.2z M437.5,363.1h1.2v1.2h-1.2z M437.5,366.4h1.2v1.2h-1.2z M437.5,369.8h1.2v1.2h-1.2z M437.5,373.1h1.2v1.2h-1.2z M437.5,376.4h1.2v1.2h-1.2z M437.5,379.7h1.2v1.2h-1.2z M437.5,383.0h1.2v1.2h-1.2z M437.5,386.3h1.2v1.2h-1.2z M437.5,389.6h1.2v1.2h-1.2z M437.5,392.9h1.2v1.2h-1.2z M437.5,396.2h1.2v1.2h-1.2z M510.5,72.3h1.2v1.2h-1.2z M510.5,75.6h1.2v1.2h-1.2z M510.5,78.9h1.2v1.2h-1.2z M510.5,82.2h1.2v1.2h-1.2z M510.5,85.5h1.2v1.2h-1.2z M510.5,88.8h1.2v1.2h-1.2z M510.5,92.1h1.2v1.2h-1.2z M510.5,95.4h1.2v1.2h-1.2z M510.5,98.7h1.2v1.2h-1.2z M510.5,102.1h1.2v1.2h-1.2z M510.5,105.4h1.2v1.2h-1.2z M510.5,108.7h1.2v1.2h-1.2z M510.5,112.0h1.2v1.2h-1.2z M510.5,115.3h1.2v1.2h-1.2z M510.5,118.6h1.2v1.2h-1.2z M510.5,121.9h1.2v1.2h-1.2z M510.5,125.2h1.2v1.2h-1.2z M510.5,128.5h1.2v1.2h-1.2z M510.5,131.8h1.2v1.2h-1.2z M510.5,135.1h1.2v1.2h-1.2z M510.5,138.4h1.2v1.2h-1.2z M510.5,141.7h1.2v1.2h-1.2z M510.5,145.0h1.2v1.2h-1.2z M510.5,148.3h1.2v1.2h-1.2z M510.5,151.6h1.2v1.2h-1.2z M510.5,154.9h1.2v1.2h-1.2z M510.5,158.2h1.2v1.2h-1.2z M510.5,161.5h1.2v1.2h-1.2z M510.5,164.8h1.2v1.2h-1.2z M510.5,168.2h1.2v1.2h-1.2z M510.5,171.5h1.2v1.2h-1.2z M510.5,174.8h1.2v1.2h-1.2z M510.5,178.1h1.2v1.2h-1.2z M510.5,181.4h1.2v1.2h-1.2z M510.5,184.7h1.2v1.2h-1.2z M510.5,188.0h1.2v1.2h-1.2z M510.5,191.3h1.2v1.2h-1.2z M510.5,194.6h1.2v1.2h-1.2z M510.5,197.9h1.2v1.2h-1.2z M510.5,201.2h1.2v1.2h-1.2z M510.5,204.5h1.2v1.2h-1.2z M510.5,207.8h1.2v1.2h-1.2z M510.5,211.1h1.2v1.2h-1.2z M510.5,214.4h1.2v1.2h-1.2z M510.5,217.7h1.2v1.2h-1.2z M510.5,221.0h1.2v1.2h-1.2z M510.5,224.3h1.2v1.2h-1.2z M510.5,227.6h1.2v1.2h-1.2z M510.5,230.9h1.2v1.2h-1.2z M510.5,234.2h1.2v1.2h-1.2z M510.5,237.6h1.2v1.2h-1.2z M510.5,240.9h1.2v1.2h-1.2z M510.5,244.2h1.2v1.2h-1.2z M510.5,247.5h1.2v1.2h-1.2z M510.5,250.8h1.2v1.2h-1.2z M510.5,254.1h1.2v1.2h-1.2z M510.5,257.4h1.2v1.2h-1.2z M510.5,260.7h1.2v1.2h-1.2z M510.5,264.0h1.2v1.2h-1.2z M510.5,267.3h1.2v1.2h-1.2z M510.5,270.6h1.2v1.2h-1.2z M510.5,273.9h1.2v1.2h-1.2z M510.5,277.2h1.2v1.2h-1.2z M510.5,280.5h1.2v1.2h-1.2z M510.5,283.8h1.2v1.2h-1.2z M510.5,287.1h1.2v1.2h-1.2z M510.5,290.4h1.2v1.2h-1.2z M510.5,293.7h1.2v1.2h-1.2z M510.5,297.0h1.2v1.2h-1.2z M510.5,300.4h1.2v1.2h-1.2z M510.5,303.7h1.2v1.2h-1.2z M510.5,307.0h1.2v1.2h-1.2z M510.5,310.3h1.2v1.2h-1.2z M510.5,313.6h1.2v1.2h-1.2z M510.5,316.9h1.2v1.2h-1.2z M510.5,320.2h1.2v1.2h-1.2z M510.5,323.5h1.2v1.2h-1.2z M510.5,326.8h1.2v1.2h-1.2z M510.5,330.1h1.2v1.2h-1.2z M510.5,333.4h1.2v1.2h-1.2z M510.5,336.7h1.2v1.2h-1.2z M510.5,340.0h1.2v1.2h-1.2z M510.5,343.3h1.2v1.2h-1.2z M510.5,346.6h1.2v1.2h-1.2z M510.5,349.9h1.2v1.2h-1.2z M510.5,353.2h1.2v1.2h-1.2z M510.5,356.5h1.2v1.2h-1.2z M510.5,359.8h1.2v1.2h-1.2z M510.5,363.1h1.2v1.2h-1.2z M510.5,366.4h1.2v1.2h-1.2z M510.5,369.8h1.2v1.2h-1.2z M510.5,373.1h1.2v1.2h-1.2z M510.5,376.4h1.2v1.2h-1.2z M510.5,379.7h1.2v1.2h-1.2z M510.5,383.0h1.2v1.2h-1.2z M510.5,386.3h1.2v1.2h-1.2z M510.5,389.6h1.2v1.2h-1.2z M510.5,392.9h1.2v1.2h-1.2z M510.5,396.2h1.2v1.2h-1.2z M583.5,72.3h1.2v1.2h-1.2z M583.5,75.6h1.2v1.2h-1.2z M583.5,78.9h1.2v1.2h-1.2z M583.5,82.2h1.2v1.2h-1.2z M583.5,85.5h1.2v1.2h-1.2z M583.5,88.8h1.2v1.2h-1.2z M583.5,92.1h1.2v1.2h-1.2z M583.5,95.4h1.2v1.2h-1.2z M583.5,98.7h1.2v1.2h-1.2z M583.5,102.1h1.2v1.2h-1.2z M583.5,105.4h1.2v1.2h-1.2z M583.5,108.7h1.2v1.2h-1.2z M583.5,112.0h1.2v1.2h-1.2z M583.5,115.3h1.2v1.2h-1.2z M583.5,118.6h1.2v1.2h-1.2z M583.5,121.9h1.2v1.2h-1.2z M583.5,125.2h1.2v1.2h-1.2z M583.5,128.5h1.2v1.2h-1.2z M583.5,131.8h1.2v1.2h-1.2z M583.5,135.1h1.2v1.2h-1.2z M583.5,138.4h1.2v1.2h-1.2z M583.5,141.7h1.2v1.2h-1.2z M583.5,145.0h1.2v1.2h-1.2z M583.5,148.3h1.2v1.2h-1.2z M583.5,151.6h1.2v1.2h-1.2z M583.5,154.9h1.2v1.2h-1.2z M583.5,158.2h1.2v1.2h-1.2z M583.5,161.5h1.2v1.2h-1.2z M583.5,164.8h1.2v1.2h-1.2z M583.5,168.2h1.2v1.2h-1.2z M583.5,171.5h1.2v1.2h-1.2z M583.5,174.8h1.2v1.2h-1.2z M583.5,178.1h1.2v1.2h-1.2z M583.5,181.4h1.2v1.2h-1.2z M583.5,184.7h1.2v1.2h-1.2z M583.5,188.0h1.2v1.2h-1.2z M583.5,191.3h1.2v1.2h-1.2z M583.5,194.6h1.2v1.2h-1.2z M583.5,197.9h1.2v1.2h-1.2z M583.5,201.2h1.2v1.2h-1.2z M583.5,204.5h1.2v1.2h-1.2z M583.5,207.8h1.2v1.2h-1.2z M583.5,211.1h1.2v1.2h-1.2z M583.5,214.4h1.2v1.2h-1.2z M583.5,217.7h1.2v1.2h-1.2z M583.5,221.0h1.2v1.2h-1.2z M583.5,224.3h1.2v1.2h-1.2z M583.5,227.6h1.2v1.2h-1.2z M583.5,230.9h1.2v1.2h-1.2z M583.5,234.2h1.2v1.2h-1.2z M583.5,237.6h1.2v1.2h-1.2z M583.5,240.9h1.2v1.2h-1.2z M583.5,244.2h1.2v1.2h-1.2z M583.5,247.5h1.2v1.2h-1.2z M583.5,250.8h1.2v1.2h-1.2z M583.5,254.1h1.2v1.2h-1.2z M583.5,257.4h1.2v1.2h-1.2z M583.5,260.7h1.2v1.2h-1.2z M583.5,264.0h1.2v1.2h-1.2z M583.5,267.3h1.2v1.2h-1.2z M583.5,270.6h1.2v1.2h-1.2z M583.5,273.9h1.2v1.2h-1.2z M583.5,277.2h1.2v1.2h-1.2z M583.5,280.5h1.2v1.2h-1.2z M583.5,283.8h1.2v1.2h-1.2z M583.5,287.1h1.2v1.2h-1.2z M583.5,290.4h1.2v1.2h-1.2z M583.5,293.7h1.2v1.2h-1.2z M583.5,297.0h1.2v1.2h-1.2z M583.5,300.4h1.2v1.2h-1.2z M583.5,303.7h1.2v1.2h-1.2z M583.5,307.0h1.2v1.2h-1.2z M583.5,310.3h1.2v1.2h-1.2z M583.5,313.6h1.2v1.2h-1.2z M583.5,316.9h1.2v1.2h-1.2z M583.5,320.2h1.2v1.2h-1.2z M583.5,323.5h1.2v1.2h-1.2z M583.5,326.8h1.2v1.2h-1.2z M583.5,330.1h1.2v1.2h-1.2z M583.5,333.4h1.2v1.2h-1.2z M583.5,336.7h1.2v1.2h-1.2z M583.5,340.0h1.2v1.2h-1.2z M583.5,343.3h1.2v1.2h-1.2z M583.5,346.6h1.2v1.2h-1.2z M583.5,349.9h1.2v1.2h-1.2z M583.5,353.2h1.2v1.2h-1.2z M583.5,356.5h1.2v1.2h-1.2z M583.5,359.8h1.2v1.2h-1.2z M583.5,363.1h1.2v1.2h-1.2z M583.5,366.4h1.2v1.2h-1.2z M583.5,369.8h1.2v1.2h-1.2z M583.5,373.1h1.2v1.2h-1.2z M583.5,376.4h1.2v1.2h-1.2z M583.5,379.7h1.2v1.2h-1.2z M583.5,383.0h1.2v1.2h-1.2z M583.5,386.3h1.2v1.2h-1.2z M583.5,389.6h1.2v1.2h-1.2z M583.5,392.9h1.2v1.2h-1.2z M583.5,396.2h1.2v1.2h-1.2z M656.5,72.3h1.2v1.2h-1.2z M656.5,75.6h1.2v1.2h-1.2z M656.5,78.9h1.2v1.2h-1.2z M656.5,82.2h1.2v1.2h-1.2z M656.5,85.5h1.2v1.2h-1.2z M656.5,88.8h1.2v1.2h-1.2z M656.5,92.1h1.2v1.2h-1.2z M656.5,95.4h1.2v1.2h-1.2z M656.5,98.7h1.2v1.2h-1.2z M656.5,102.1h1.2v1.2h-1.2z M656.5,105.4h1.2v1.2h-1.2z M656.5,108.7h1.2v1.2h-1.2z M656.5,112.0h1.2v1.2h-1.2z M656.5,115.3h1.2v1.2h-1.2z M656.5,118.6h1.2v1.2h-1.2z M656.5,121.9h1.2v1.2h-1.2z M656.5,125.2h1.2v1.2h-1.2z M656.5,128.5h1.2v1.2h-1.2z M656.5,131.8h1.2v1.2h-1.2z M656.5,135.1h1.2v1.2h-1.2z M656.5,138.4h1.2v1.2h-1.2z M656.5,141.7h1.2v1.2h-1.2z M656.5,145.0h1.2v1.2h-1.2z M656.5,148.3h1.2v1.2h-1.2z M656.5,151.6h1.2v1.2h-1.2z M656.5,154.9h1.2v1.2h-1.2z M656.5,158.2h1.2v1.2h-1.2z M656.5,161.5h1.2v1.2h-1.2z M656.5,164.8h1.2v1.2h-1.2z M656.5,168.2h1.2v1.2h-1.2z M656.5,171.5h1.2v1.2h-1.2z M656.5,174.8h1.2v1.2h-1.2z M656.5,178.1h1.2v1.2h-1.2z M656.5,181.4h1.2v1.2h-1.2z M656.5,184.7h1.2v1.2h-1.2z M656.5,188.0h1.2v1.2h-1.2z M656.5,191.3h1.2v1.2h-1.2z M656.5,194.6h1.2v1.2h-1.2z M656.5,197.9h1.2v1.2h-1.2z M656.5,201.2h1.2v1.2h-1.2z M656.5,204.5h1.2v1.2h-1.2z M656.5,207.8h1.2v1.2h-1.2z M656.5,211.1h1.2v1.2h-1.2z M656.5,214.4h1.2v1.2h-1.2z M656.5,217.7h1.2v1.2h-1.2z M656.5,221.0h1.2v1.2h-1.2z M656.5,224.3h1.2v1.2h-1.2z M656.5,227.6h1.2v1.2h-1.2z M656.5,230.9h1.2v1.2h-1.2z M656.5,234.2h1.2v1.2h-1.2z M656.5,237.6h1.2v1.2h-1.2z M656.5,240.9h1.2v1.2h-1.2z M656.5,244.2h1.2v1.2h-1.2z M656.5,247.5h1.2v1.2h-1.2z M656.5,250.8h1.2v1.2h-1.2z M656.5,254.1h1.2v1.2h-1.2z M656.5,257.4h1.2v1.2h-1.2z M656.5,260.7h1.2v1.2h-1.2z M656.5,264.0h1.2v1.2h-1.2z M656.5,267.3h1.2v1.2h-1.2z M656.5,270.6h1.2v1.2h-1.2z M656.5,273.9h1.2v1.2h-1.2z M656.5,277.2h1.2v1.2h-1.2z M656.5,280.5h1.2v1.2h-1.2z M656.5,283.8h1.2v1.2h-1.2z M656.5,287.1h1.2v1.2h-1.2z M656.5,290.4h1.2v1.2h-1.2z M656.5,293.7h1.2v1.2h-1.2z M656.5,297.0h1.2v1.2h-1.2z M656.5,300.4h1.2v1.2h-1.2z M656.5,303.7h1.2v1.2h-1.2z M656.5,307.0h1.2v1.2h-1.2z M656.5,310.3h1.2v1.2h-1.2z M656.5,313.6h1.2v1.2h-1.2z M656.5,316.9h1.2v1.2h-1.2z M656.5,320.2h1.2v1.2h-1.2z M656.5,323.5h1.2v1.2h-1.2z M656.5,326.8h1.2v1.2h-1.2z M656.5,330.1h1.2v1.2h-1.2z M656.5,333.4h1.2v1.2h-1.2z M656.5,336.7h1.2v1.2h-1.2z M656.5,340.0h1.2v1.2h-1.2z M656.5,343.3h1.2v1.2h-1.2z M656.5,346.6h1.2v1.2h-1.2z M656.5,349.9h1.2v1.2h-1.2z M656.5,353.2h1.2v1.2h-1.2z M656.5,356.5h1.2v1.2h-1.2z M656.5,359.8h1.2v1.2h-1.2z M656.5,363.1h1.2v1.2h-1.2z M656.5,366.4h1.2v1.2h-1.2z M656.5,369.8h1.2v1.2h-1.2z M656.5,373.1h1.2v1.2h-1.2z M656.5,376.4h1.2v1.2h-1.2z M656.5,379.7h1.2v1.2h-1.2z M656.5,383.0h1.2v1.2h-1.2z M656.5,386.3h1.2v1.2h-1.2z M656.5,389.6h1.2v1.2h-1.2z M656.5,392.9h1.2v1.2h-1.2z M656.5,396.2h1.2v1.2h-1.2z M729.5,72.3h1.2v1.2h-1.2z M729.5,75.6h1.2v1.2h-1.2z M729.5,78.9h1.2v1.2h-1.2z M729.5,82.2h1.2v1.2h-1.2z M729.5,85.5h1.2v1.2h-1.2z M729.5,88.8h1.2v1.2h-1.2z M729.5,92.1h1.2v1.2h-1.2z M729.5,95.4h1.2v1.2h-1.2z M729.5,98.7h1.2v1.2h-1.2z M729.5,102.1h1.2v1.2h-1.2z M729.5,105.4h1.2v1.2h-1.2z M729.5,108.7h1.2v1.2h-1.2z M729.5,112.0h1.2v1.2h-1.2z M729.5,115.3h1.2v1.2h-1.2z M729.5,118.6h1.2v1.2h-1.2z M729.5,121.9h1.2v1.2h-1.2z M729.5,125.2h1.2v1.2h-1.2z M729.5,128.5h1.2v1.2h-1.2z M729.5,131.8h1.2v1.2h-1.2z M729.5,135.1h1.2v1.2h-1.2z M729.5,138.4h1.2v1.2h-1.2z M729.5,141.7h1.2v1.2h-1.2z M729.5,145.0h1.2v1.2h-1.2z M729.5,148.3h1.2v1.2h-1.2z M729.5,151.6h1.2v1.2h-1.2z M729.5,154.9h1.2v1.2h-1.2z M729.5,158.2h1.2v1.2h-1.2z M729.5,161.5h1.2v1.2h-1.2z M729.5,164.8h1.2v1.2h-1.2z M729.5,168.2h1.2v1.2h-1.2z M729.5,171.5h1.2v1.2h-1.2z M729.5,174.8h1.2v1.2h-1.2z M729.5,178.1h1.2v1.2h-1.2z M729.5,181.4h1.2v1.2h-1.2z M729.5,184.7h1.2v1.2h-1.2z M729.5,188.0h1.2v1.2h-1.2z M729.5,191.3h1.2v1.2h-1.2z M729.5,194.6h1.2v1.2h-1.2z M729.5,197.9h1.2v1.2h-1.2z M729.5,201.2h1.2v1.2h-1.2z M729.5,204.5h1.2v1.2h-1.2z M729.5,207.8h1.2v1.2h-1.2z M729.5,211.1h1.2v1.2h-1.2z M729.5,214.4h1.2v1.2h-1.2z M729.5,217.7h1.2v1.2h-1.2z M729.5,221.0h1.2v1.2h-1.2z M729.5,224.3h1.2v1.2h-1.2z M729.5,227.6h1.2v1.2h-1.2z M729.5,230.9h1.2v1.2h-1.2z M729.5,234.2h1.2v1.2h-1.2z M729.5,237.6h1.2v1.2h-1.2z M729.5,240.9h1.2v1.2h-1.2z M729.5,244.2h1.2v1.2h-1.2z M729.5,247.5h1.2v1.2h-1.2z M729.5,250.8h1.2v1.2h-1.2z M729.5,254.1h1.2v1.2h-1.2z M729.5,257.4h1.2v1.2h-1.2z M729.5,260.7h1.2v1.2h-1.2z M729.5,264.0h1.2v1.2h-1.2z M729.5,267.3h1.2v1.2h-1.2z M729.5,270.6h1.2v1.2h-1.2z M729.5,273.9h1.2v1.2h-1.2z M729.5,277.2h1.2v1.2h-1.2z M729.5,280.5h1.2v1.2h-1.2z M729.5,283.8h1.2v1.2h-1.2z M729.5,287.1h1.2v1.2h-1.2z M729.5,290.4h1.2v1.2h-1.2z M729.5,293.7h1.2v1.2h-1.2z M729.5,297.0h1.2v1.2h-1.2z M729.5,300.4h1.2v1.2h-1.2z M729.5,303.7h1.2v1.2h-1.2z M729.5,307.0h1.2v1.2h-1.2z M729.5,310.3h1.2v1.2h-1.2z M729.5,313.6h1.2v1.2h-1.2z M729.5,316.9h1.2v1.2h-1.2z M729.5,320.2h1.2v1.2h-1.2z M729.5,323.5h1.2v1.2h-1.2z M729.5,326.8h1.2v1.2h-1.2z M729.5,330.1h1.2v1.2h-1.2z M729.5,333.4h1.2v1.2h-1.2z M729.5,336.7h1.2v1.2h-1.2z M729.5,340.0h1.2v1.2h-1.2z M729.5,343.3h1.2v1.2h-1.2z M729.5,346.6h1.2v1.2h-1.2z M729.5,349.9h1.2v1.2h-1.2z M729.5,353.2h1.2v1.2h-1.2z M729.5,356.5h1.2v1.2h-1.2z M729.5,359.8h1.2v1.2h-1.2z M729.5,363.1h1.2v1.2h-1.2z M729.5,366.4h1.2v1.2h-1.2z M729.5,369.8h1.2v1.2h-1.2z M729.5,373.1h1.2v1.2h-1.2z M729.5,376.4h1.2v1.2h-1.2z M729.5,379.7h1.2v1.2h-1.2z M729.5,383.0h1.2v1.2h-1.2z M729.5,386.3h1.2v1.2h-1.2z M729.5,389.6h1.2v1.2h-1.2z M729.5,392.9h1.2v1.2h-1.2z M729.5,396.2h1.2v1.2h-1.2z M-0.2,201.2h1.2v1.2h-1.2z M7.1,201.2h1.2v1.2h-1.2z M14.4,201.2h1.2v1.2h-1.2z M21.7,201.2h1.2v1.2h-1.2z M29.0,201.2h1.2v1.2h-1.2z M36.3,201.2h1.2v1.2h-1.2z M43.6,201.2h1.2v1.2h-1.2z M50.9,201.2h1.2v1.2h-1.2z M58.2,201.2h1.2v1.2h-1.2z M65.5,201.2h1.2v1.2h-1.2z M72.8,201.2h1.2v1.2h-1.2z M80.1,201.2h1.2v1.2h-1.2z M87.4,201.2h1.2v1.2h-1.2z M94.7,201.2h1.2v1.2h-1.2z M102.0,201.2h1.2v1.2h-1.2z M109.3,201.2h1.2v1.2h-1.2z M116.6,201.2h1.2v1.2h-1.2z M123.9,201.2h1.2v1.2h-1.2z M131.2,201.2h1.2v1.2h-1.2z M138.5,201.2h1.2v1.2h-1.2z M145.8,201.2h1.2v1.2h-1.2z M153.1,201.2h1.2v1.2h-1.2z M160.4,201.2h1.2v1.2h-1.2z M167.7,201.2h1.2v1.2h-1.2z M175.0,201.2h1.2v1.2h-1.2z M182.3,201.2h1.2v1.2h-1.2z M189.6,201.2h1.2v1.2h-1.2z M196.9,201.2h1.2v1.2h-1.2z M204.2,201.2h1.2v1.2h-1.2z M211.5,201.2h1.2v1.2h-1.2z M218.8,201.2h1.2v1.2h-1.2z M226.1,201.2h1.2v1.2h-1.2z M233.4,201.2h1.2v1.2h-1.2z M240.7,201.2h1.2v1.2h-1.2z M248.0,201.2h1.2v1.2h-1.2z M255.3,201.2h1.2v1.2h-1.2z M262.6,201.2h1.2v1.2h-1.2z M269.9,201.2h1.2v1.2h-1.2z M277.2,201.2h1.2v1.2h-1.2z M284.5,201.2h1.2v1.2h-1.2z M291.8,201.2h1.2v1.2h-1.2z M299.1,201.2h1.2v1.2h-1.2z M306.4,201.2h1.2v1.2h-1.2z M313.7,201.2h1.2v1.2h-1.2z M321.0,201.2h1.2v1.2h-1.2z M328.3,201.2h1.2v1.2h-1.2z M335.6,201.2h1.2v1.2h-1.2z M342.9,201.2h1.2v1.2h-1.2z M350.2,201.2h1.2v1.2h-1.2z M357.5,201.2h1.2v1.2h-1.2z M364.8,201.2h1.2v1.2h-1.2z M372.1,201.2h1.2v1.2h-1.2z M379.4,201.2h1.2v1.2h-1.2z M386.7,201.2h1.2v1.2h-1.2z M394.0,201.2h1.2v1.2h-1.2z M401.3,201.2h1.2v1.2h-1.2z M408.6,201.2h1.2v1.2h-1.2z M415.9,201.2h1.2v1.2h-1.2z M423.2,201.2h1.2v1.2h-1.2z M430.5,201.2h1.2v1.2h-1.2z M437.8,201.2h1.2v1.2h-1.2z M445.1,201.2h1.2v1.2h-1.2z M452.4,201.2h1.2v1.2h-1.2z M459.7,201.2h1.2v1.2h-1.2z M467.0,201.2h1.2v1.2h-1.2z M474.3,201.2h1.2v1.2h-1.2z M481.6,201.2h1.2v1.2h-1.2z M488.9,201.2h1.2v1.2h-1.2z M496.2,201.2h1.2v1.2h-1.2z M503.5,201.2h1.2v1.2h-1.2z M510.8,201.2h1.2v1.2h-1.2z M518.1,201.2h1.2v1.2h-1.2z M525.4,201.2h1.2v1.2h-1.2z M532.7,201.2h1.2v1.2h-1.2z M540.0,201.2h1.2v1.2h-1.2z M547.3,201.2h1.2v1.2h-1.2z M554.6,201.2h1.2v1.2h-1.2z M561.9,201.2h1.2v1.2h-1.2z M569.2,201.2h1.2v1.2h-1.2z M576.5,201.2h1.2v1.2h-1.2z M583.8,201.2h1.2v1.2h-1.2z M591.1,201.2h1.2v1.2h-1.2z M598.4,201.2h1.2v1.2h-1.2z M605.7,201.2h1.2v1.2h-1.2z M613.0,201.2h1.2v1.2h-1.2z M620.3,201.2h1.2v1.2h-1.2z M627.6,201.2h1.2v1.2h-1.2z M634.9,201.2h1.2v1.2h-1.2z M642.2,201.2h1.2v1.2h-1.2z M649.5,201.2h1.2v1.2h-1.2z M656.8,201.2h1.2v1.2h-1.2z M664.1,201.2h1.2v1.2h-1.2z M671.4,201.2h1.2v1.2h-1.2z M678.7,201.2h1.2v1.2h-1.2z M686.0,201.2h1.2v1.2h-1.2z M693.3,201.2h1.2v1.2h-1.2z M700.6,201.2h1.2v1.2h-1.2z M707.9,201.2h1.2v1.2h-1.2z M715.2,201.2h1.2v1.2h-1.2z M722.5,201.2h1.2v1.2h-1.2z M729.8,201.2h1.2v1.2h-1.2z M-0.2,267.3h1.2v1.2h-1.2z M7.1,267.3h1.2v1.2h-1.2z M14.4,267.3h1.2v1.2h-1.2z M21.7,267.3h1.2v1.2h-1.2z M29.0,267.3h1.2v1.2h-1.2z M36.3,267.3h1.2v1.2h-1.2z M43.6,267.3h1.2v1.2h-1.2z M50.9,267.3h1.2v1.2h-1.2z M58.2,267.3h1.2v1.2h-1.2z M65.5,267.3h1.2v1.2h-1.2z M72.8,267.3h1.2v1.2h-1.2z M80.1,267.3h1.2v1.2h-1.2z M87.4,267.3h1.2v1.2h-1.2z M94.7,267.3h1.2v1.2h-1.2z M102.0,267.3h1.2v1.2h-1.2z M109.3,267.3h1.2v1.2h-1.2z M116.6,267.3h1.2v1.2h-1.2z M123.9,267.3h1.2v1.2h-1.2z M131.2,267.3h1.2v1.2h-1.2z M138.5,267.3h1.2v1.2h-1.2z M145.8,267.3h1.2v1.2h-1.2z M153.1,267.3h1.2v1.2h-1.2z M160.4,267.3h1.2v1.2h-1.2z M167.7,267.3h1.2v1.2h-1.2z M175.0,267.3h1.2v1.2h-1.2z M182.3,267.3h1.2v1.2h-1.2z M189.6,267.3h1.2v1.2h-1.2z M196.9,267.3h1.2v1.2h-1.2z M204.2,267.3h1.2v1.2h-1.2z M211.5,267.3h1.2v1.2h-1.2z M218.8,267.3h1.2v1.2h-1.2z M226.1,267.3h1.2v1.2h-1.2z M233.4,267.3h1.2v1.2h-1.2z M240.7,267.3h1.2v1.2h-1.2z M248.0,267.3h1.2v1.2h-1.2z M255.3,267.3h1.2v1.2h-1.2z M262.6,267.3h1.2v1.2h-1.2z M269.9,267.3h1.2v1.2h-1.2z M277.2,267.3h1.2v1.2h-1.2z M284.5,267.3h1.2v1.2h-1.2z M291.8,267.3h1.2v1.2h-1.2z M299.1,267.3h1.2v1.2h-1.2z M306.4,267.3h1.2v1.2h-1.2z M313.7,267.3h1.2v1.2h-1.2z M321.0,267.3h1.2v1.2h-1.2z M328.3,267.3h1.2v1.2h-1.2z M335.6,267.3h1.2v1.2h-1.2z M342.9,267.3h1.2v1.2h-1.2z M350.2,267.3h1.2v1.2h-1.2z M357.5,267.3h1.2v1.2h-1.2z M364.8,267.3h1.2v1.2h-1.2z M372.1,267.3h1.2v1.2h-1.2z M379.4,267.3h1.2v1.2h-1.2z M386.7,267.3h1.2v1.2h-1.2z M394.0,267.3h1.2v1.2h-1.2z M401.3,267.3h1.2v1.2h-1.2z M408.6,267.3h1.2v1.2h-1.2z M415.9,267.3h1.2v1.2h-1.2z M423.2,267.3h1.2v1.2h-1.2z M430.5,267.3h1.2v1.2h-1.2z M437.8,267.3h1.2v1.2h-1.2z M445.1,267.3h1.2v1.2h-1.2z M452.4,267.3h1.2v1.2h-1.2z M459.7,267.3h1.2v1.2h-1.2z M467.0,267.3h1.2v1.2h-1.2z M474.3,267.3h1.2v1.2h-1.2z M481.6,267.3h1.2v1.2h-1.2z M488.9,267.3h1.2v1.2h-1.2z M496.2,267.3h1.2v1.2h-1.2z M503.5,267.3h1.2v1.2h-1.2z M510.8,267.3h1.2v1.2h-1.2z M518.1,267.3h1.2v1.2h-1.2z M525.4,267.3h1.2v1.2h-1.2z M532.7,267.3h1.2v1.2h-1.2z M540.0,267.3h1.2v1.2h-1.2z M547.3,267.3h1.2v1.2h-1.2z M554.6,267.3h1.2v1.2h-1.2z M561.9,267.3h1.2v1.2h-1.2z M569.2,267.3h1.2v1.2h-1.2z M576.5,267.3h1.2v1.2h-1.2z M583.8,267.3h1.2v1.2h-1.2z M591.1,267.3h1.2v1.2h-1.2z M598.4,267.3h1.2v1.2h-1.2z M605.7,267.3h1.2v1.2h-1.2z M613.0,267.3h1.2v1.2h-1.2z M620.3,267.3h1.2v1.2h-1.2z M627.6,267.3h1.2v1.2h-1.2z M634.9,267.3h1.2v1.2h-1.2z M642.2,267.3h1.2v1.2h-1.2z M649.5,267.3h1.2v1.2h-1.2z M656.8,267.3h1.2v1.2h-1.2z M664.1,267.3h1.2v1.2h-1.2z M671.4,267.3h1.2v1.2h-1.2z M678.7,267.3h1.2v1.2h-1.2z M686.0,267.3h1.2v1.2h-1.2z M693.3,267.3h1.2v1.2h-1.2z M700.6,267.3h1.2v1.2h-1.2z M707.9,267.3h1.2v1.2h-1.2z M715.2,267.3h1.2v1.2h-1.2z M722.5,267.3h1.2v1.2h-1.2z M729.8,267.3h1.2v1.2h-1.2z M-0.2,300.3h1.2v1.2h-1.2z M7.1,300.3h1.2v1.2h-1.2z M14.4,300.3h1.2v1.2h-1.2z M21.7,300.3h1.2v1.2h-1.2z M29.0,300.3h1.2v1.2h-1.2z M36.3,300.3h1.2v1.2h-1.2z M43.6,300.3h1.2v1.2h-1.2z M50.9,300.3h1.2v1.2h-1.2z M58.2,300.3h1.2v1.2h-1.2z M65.5,300.3h1.2v1.2h-1.2z M72.8,300.3h1.2v1.2h-1.2z M80.1,300.3h1.2v1.2h-1.2z M87.4,300.3h1.2v1.2h-1.2z M94.7,300.3h1.2v1.2h-1.2z M102.0,300.3h1.2v1.2h-1.2z M109.3,300.3h1.2v1.2h-1.2z M116.6,300.3h1.2v1.2h-1.2z M123.9,300.3h1.2v1.2h-1.2z M131.2,300.3h1.2v1.2h-1.2z M138.5,300.3h1.2v1.2h-1.2z M145.8,300.3h1.2v1.2h-1.2z M153.1,300.3h1.2v1.2h-1.2z M160.4,300.3h1.2v1.2h-1.2z M167.7,300.3h1.2v1.2h-1.2z M175.0,300.3h1.2v1.2h-1.2z M182.3,300.3h1.2v1.2h-1.2z M189.6,300.3h1.2v1.2h-1.2z M196.9,300.3h1.2v1.2h-1.2z M204.2,300.3h1.2v1.2h-1.2z M211.5,300.3h1.2v1.2h-1.2z M218.8,300.3h1.2v1.2h-1.2z M226.1,300.3h1.2v1.2h-1.2z M233.4,300.3h1.2v1.2h-1.2z M240.7,300.3h1.2v1.2h-1.2z M248.0,300.3h1.2v1.2h-1.2z M255.3,300.3h1.2v1.2h-1.2z M262.6,300.3h1.2v1.2h-1.2z M269.9,300.3h1.2v1.2h-1.2z M277.2,300.3h1.2v1.2h-1.2z M284.5,300.3h1.2v1.2h-1.2z M291.8,300.3h1.2v1.2h-1.2z M299.1,300.3h1.2v1.2h-1.2z M306.4,300.3h1.2v1.2h-1.2z M313.7,300.3h1.2v1.2h-1.2z M321.0,300.3h1.2v1.2h-1.2z M328.3,300.3h1.2v1.2h-1.2z M335.6,300.3h1.2v1.2h-1.2z M342.9,300.3h1.2v1.2h-1.2z M350.2,300.3h1.2v1.2h-1.2z M357.5,300.3h1.2v1.2h-1.2z M364.8,300.3h1.2v1.2h-1.2z M372.1,300.3h1.2v1.2h-1.2z M379.4,300.3h1.2v1.2h-1.2z M386.7,300.3h1.2v1.2h-1.2z M394.0,300.3h1.2v1.2h-1.2z M401.3,300.3h1.2v1.2h-1.2z M408.6,300.3h1.2v1.2h-1.2z M415.9,300.3h1.2v1.2h-1.2z M423.2,300.3h1.2v1.2h-1.2z M430.5,300.3h1.2v1.2h-1.2z M437.8,300.3h1.2v1.2h-1.2z M445.1,300.3h1.2v1.2h-1.2z M452.4,300.3h1.2v1.2h-1.2z M459.7,300.3h1.2v1.2h-1.2z M467.0,300.3h1.2v1.2h-1.2z M474.3,300.3h1.2v1.2h-1.2z M481.6,300.3h1.2v1.2h-1.2z M488.9,300.3h1.2v1.2h-1.2z M496.2,300.3h1.2v1.2h-1.2z M503.5,300.3h1.2v1.2h-1.2z M510.8,300.3h1.2v1.2h-1.2z M518.1,300.3h1.2v1.2h-1.2z M525.4,300.3h1.2v1.2h-1.2z M532.7,300.3h1.2v1.2h-1.2z M540.0,300.3h1.2v1.2h-1.2z M547.3,300.3h1.2v1.2h-1.2z M554.6,300.3h1.2v1.2h-1.2z M561.9,300.3h1.2v1.2h-1.2z M569.2,300.3h1.2v1.2h-1.2z M576.5,300.3h1.2v1.2h-1.2z M583.8,300.3h1.2v1.2h-1.2z M591.1,300.3h1.2v1.2h-1.2z M598.4,300.3h1.2v1.2h-1.2z M605.7,300.3h1.2v1.2h-1.2z M613.0,300.3h1.2v1.2h-1.2z M620.3,300.3h1.2v1.2h-1.2z M627.6,300.3h1.2v1.2h-1.2z M634.9,300.3h1.2v1.2h-1.2z M642.2,300.3h1.2v1.2h-1.2z M649.5,300.3h1.2v1.2h-1.2z M656.8,300.3h1.2v1.2h-1.2z M664.1,300.3h1.2v1.2h-1.2z M671.4,300.3h1.2v1.2h-1.2z M678.7,300.3h1.2v1.2h-1.2z M686.0,300.3h1.2v1.2h-1.2z M693.3,300.3h1.2v1.2h-1.2z M700.6,300.3h1.2v1.2h-1.2z M707.9,300.3h1.2v1.2h-1.2z M715.2,300.3h1.2v1.2h-1.2z M722.5,300.3h1.2v1.2h-1.2z M729.8,300.3h1.2v1.2h-1.2z M-0.2,333.9h1.2v1.2h-1.2z M7.1,333.9h1.2v1.2h-1.2z M14.4,333.9h1.2v1.2h-1.2z M21.7,333.9h1.2v1.2h-1.2z M29.0,333.9h1.2v1.2h-1.2z M36.3,333.9h1.2v1.2h-1.2z M43.6,333.9h1.2v1.2h-1.2z M50.9,333.9h1.2v1.2h-1.2z M58.2,333.9h1.2v1.2h-1.2z M65.5,333.9h1.2v1.2h-1.2z M72.8,333.9h1.2v1.2h-1.2z M80.1,333.9h1.2v1.2h-1.2z M87.4,333.9h1.2v1.2h-1.2z M94.7,333.9h1.2v1.2h-1.2z M102.0,333.9h1.2v1.2h-1.2z M109.3,333.9h1.2v1.2h-1.2z M116.6,333.9h1.2v1.2h-1.2z M123.9,333.9h1.2v1.2h-1.2z M131.2,333.9h1.2v1.2h-1.2z M138.5,333.9h1.2v1.2h-1.2z M145.8,333.9h1.2v1.2h-1.2z M153.1,333.9h1.2v1.2h-1.2z M160.4,333.9h1.2v1.2h-1.2z M167.7,333.9h1.2v1.2h-1.2z M175.0,333.9h1.2v1.2h-1.2z M182.3,333.9h1.2v1.2h-1.2z M189.6,333.9h1.2v1.2h-1.2z M196.9,333.9h1.2v1.2h-1.2z M204.2,333.9h1.2v1.2h-1.2z M211.5,333.9h1.2v1.2h-1.2z M218.8,333.9h1.2v1.2h-1.2z M226.1,333.9h1.2v1.2h-1.2z M233.4,333.9h1.2v1.2h-1.2z M240.7,333.9h1.2v1.2h-1.2z M248.0,333.9h1.2v1.2h-1.2z M255.3,333.9h1.2v1.2h-1.2z M262.6,333.9h1.2v1.2h-1.2z M269.9,333.9h1.2v1.2h-1.2z M277.2,333.9h1.2v1.2h-1.2z M284.5,333.9h1.2v1.2h-1.2z M291.8,333.9h1.2v1.2h-1.2z M299.1,333.9h1.2v1.2h-1.2z M306.4,333.9h1.2v1.2h-1.2z M313.7,333.9h1.2v1.2h-1.2z M321.0,333.9h1.2v1.2h-1.2z M328.3,333.9h1.2v1.2h-1.2z M335.6,333.9h1.2v1.2h-1.2z M342.9,333.9h1.2v1.2h-1.2z M350.2,333.9h1.2v1.2h-1.2z M357.5,333.9h1.2v1.2h-1.2z M364.8,333.9h1.2v1.2h-1.2z M372.1,333.9h1.2v1.2h-1.2z M379.4,333.9h1.2v1.2h-1.2z M386.7,333.9h1.2v1.2h-1.2z M394.0,333.9h1.2v1.2h-1.2z M401.3,333.9h1.2v1.2h-1.2z M408.6,333.9h1.2v1.2h-1.2z M415.9,333.9h1.2v1.2h-1.2z M423.2,333.9h1.2v1.2h-1.2z M430.5,333.9h1.2v1.2h-1.2z M437.8,333.9h1.2v1.2h-1.2z M445.1,333.9h1.2v1.2h-1.2z M452.4,333.9h1.2v1.2h-1.2z M459.7,333.9h1.2v1.2h-1.2z M467.0,333.9h1.2v1.2h-1.2z M474.3,333.9h1.2v1.2h-1.2z M481.6,333.9h1.2v1.2h-1.2z M488.9,333.9h1.2v1.2h-1.2z M496.2,333.9h1.2v1.2h-1.2z M503.5,333.9h1.2v1.2h-1.2z M510.8,333.9h1.2v1.2h-1.2z M518.1,333.9h1.2v1.2h-1.2z M525.4,333.9h1.2v1.2h-1.2z M532.7,333.9h1.2v1.2h-1.2z M540.0,333.9h1.2v1.2h-1.2z M547.3,333.9h1.2v1.2h-1.2z M554.6,333.9h1.2v1.2h-1.2z M561.9,333.9h1.2v1.2h-1.2z M569.2,333.9h1.2v1.2h-1.2z M576.5,333.9h1.2v1.2h-1.2z M583.8,333.9h1.2v1.2h-1.2z M591.1,333.9h1.2v1.2h-1.2z M598.4,333.9h1.2v1.2h-1.2z M605.7,333.9h1.2v1.2h-1.2z M613.0,333.9h1.2v1.2h-1.2z M620.3,333.9h1.2v1.2h-1.2z M627.6,333.9h1.2v1.2h-1.2z M634.9,333.9h1.2v1.2h-1.2z M642.2,333.9h1.2v1.2h-1.2z M649.5,333.9h1.2v1.2h-1.2z M656.8,333.9h1.2v1.2h-1.2z M664.1,333.9h1.2v1.2h-1.2z M671.4,333.9h1.2v1.2h-1.2z M678.7,333.9h1.2v1.2h-1.2z M686.0,333.9h1.2v1.2h-1.2z M693.3,333.9h1.2v1.2h-1.2z M700.6,333.9h1.2v1.2h-1.2z M707.9,333.9h1.2v1.2h-1.2z M715.2,333.9h1.2v1.2h-1.2z M722.5,333.9h1.2v1.2h-1.2z M729.8,333.9h1.2v1.2h-1.2z M-0.2,367.0h1.2v1.2h-1.2z M7.1,367.0h1.2v1.2h-1.2z M14.4,367.0h1.2v1.2h-1.2z M21.7,367.0h1.2v1.2h-1.2z M29.0,367.0h1.2v1.2h-1.2z M36.3,367.0h1.2v1.2h-1.2z M43.6,367.0h1.2v1.2h-1.2z M50.9,367.0h1.2v1.2h-1.2z M58.2,367.0h1.2v1.2h-1.2z M65.5,367.0h1.2v1.2h-1.2z M72.8,367.0h1.2v1.2h-1.2z M80.1,367.0h1.2v1.2h-1.2z M87.4,367.0h1.2v1.2h-1.2z M94.7,367.0h1.2v1.2h-1.2z M102.0,367.0h1.2v1.2h-1.2z M109.3,367.0h1.2v1.2h-1.2z M116.6,367.0h1.2v1.2h-1.2z M123.9,367.0h1.2v1.2h-1.2z M131.2,367.0h1.2v1.2h-1.2z M138.5,367.0h1.2v1.2h-1.2z M145.8,367.0h1.2v1.2h-1.2z M153.1,367.0h1.2v1.2h-1.2z M160.4,367.0h1.2v1.2h-1.2z M167.7,367.0h1.2v1.2h-1.2z M175.0,367.0h1.2v1.2h-1.2z M182.3,367.0h1.2v1.2h-1.2z M189.6,367.0h1.2v1.2h-1.2z M196.9,367.0h1.2v1.2h-1.2z M204.2,367.0h1.2v1.2h-1.2z M211.5,367.0h1.2v1.2h-1.2z M218.8,367.0h1.2v1.2h-1.2z M226.1,367.0h1.2v1.2h-1.2z M233.4,367.0h1.2v1.2h-1.2z M240.7,367.0h1.2v1.2h-1.2z M248.0,367.0h1.2v1.2h-1.2z M255.3,367.0h1.2v1.2h-1.2z M262.6,367.0h1.2v1.2h-1.2z M269.9,367.0h1.2v1.2h-1.2z M277.2,367.0h1.2v1.2h-1.2z M284.5,367.0h1.2v1.2h-1.2z M291.8,367.0h1.2v1.2h-1.2z M299.1,367.0h1.2v1.2h-1.2z M306.4,367.0h1.2v1.2h-1.2z M313.7,367.0h1.2v1.2h-1.2z M321.0,367.0h1.2v1.2h-1.2z M328.3,367.0h1.2v1.2h-1.2z M335.6,367.0h1.2v1.2h-1.2z M342.9,367.0h1.2v1.2h-1.2z M350.2,367.0h1.2v1.2h-1.2z M357.5,367.0h1.2v1.2h-1.2z M364.8,367.0h1.2v1.2h-1.2z M372.1,367.0h1.2v1.2h-1.2z M379.4,367.0h1.2v1.2h-1.2z M386.7,367.0h1.2v1.2h-1.2z M394.0,367.0h1.2v1.2h-1.2z M401.3,367.0h1.2v1.2h-1.2z M408.6,367.0h1.2v1.2h-1.2z M415.9,367.0h1.2v1.2h-1.2z M423.2,367.0h1.2v1.2h-1.2z M430.5,367.0h1.2v1.2h-1.2z M437.8,367.0h1.2v1.2h-1.2z M445.1,367.0h1.2v1.2h-1.2z M452.4,367.0h1.2v1.2h-1.2z M459.7,367.0h1.2v1.2h-1.2z M467.0,367.0h1.2v1.2h-1.2z M474.3,367.0h1.2v1.2h-1.2z M481.6,367.0h1.2v1.2h-1.2z M488.9,367.0h1.2v1.2h-1.2z M496.2,367.0h1.2v1.2h-1.2z M503.5,367.0h1.2v1.2h-1.2z M510.8,367.0h1.2v1.2h-1.2z M518.1,367.0h1.2v1.2h-1.2z M525.4,367.0h1.2v1.2h-1.2z M532.7,367.0h1.2v1.2h-1.2z M540.0,367.0h1.2v1.2h-1.2z M547.3,367.0h1.2v1.2h-1.2z M554.6,367.0h1.2v1.2h-1.2z M561.9,367.0h1.2v1.2h-1.2z M569.2,367.0h1.2v1.2h-1.2z M576.5,367.0h1.2v1.2h-1.2z M583.8,367.0h1.2v1.2h-1.2z M591.1,367.0h1.2v1.2h-1.2z M598.4,367.0h1.2v1.2h-1.2z M605.7,367.0h1.2v1.2h-1.2z M613.0,367.0h1.2v1.2h-1.2z M620.3,367.0h1.2v1.2h-1.2z M627.6,367.0h1.2v1.2h-1.2z M634.9,367.0h1.2v1.2h-1.2z M642.2,367.0h1.2v1.2h-1.2z M649.5,367.0h1.2v1.2h-1.2z M656.8,367.0h1.2v1.2h-1.2z M664.1,367.0h1.2v1.2h-1.2z M671.4,367.0h1.2v1.2h-1.2z M678.7,367.0h1.2v1.2h-1.2z M686.0,367.0h1.2v1.2h-1.2z M693.3,367.0h1.2v1.2h-1.2z M700.6,367.0h1.2v1.2h-1.2z M707.9,367.0h1.2v1.2h-1.2z M715.2,367.0h1.2v1.2h-1.2z M722.5,367.0h1.2v1.2h-1.2z M729.8,367.0h1.2v1.2h-1.2z M-0.2,399.9h1.2v1.2h-1.2z M7.1,399.9h1.2v1.2h-1.2z M14.4,399.9h1.2v1.2h-1.2z M21.7,399.9h1.2v1.2h-1.2z M29.0,399.9h1.2v1.2h-1.2z M36.3,399.9h1.2v1.2h-1.2z M43.6,399.9h1.2v1.2h-1.2z M50.9,399.9h1.2v1.2h-1.2z M58.2,399.9h1.2v1.2h-1.2z M65.5,399.9h1.2v1.2h-1.2z M72.8,399.9h1.2v1.2h-1.2z M80.1,399.9h1.2v1.2h-1.2z M87.4,399.9h1.2v1.2h-1.2z M94.7,399.9h1.2v1.2h-1.2z M102.0,399.9h1.2v1.2h-1.2z M109.3,399.9h1.2v1.2h-1.2z M116.6,399.9h1.2v1.2h-1.2z M123.9,399.9h1.2v1.2h-1.2z M131.2,399.9h1.2v1.2h-1.2z M138.5,399.9h1.2v1.2h-1.2z M145.8,399.9h1.2v1.2h-1.2z M153.1,399.9h1.2v1.2h-1.2z M160.4,399.9h1.2v1.2h-1.2z M167.7,399.9h1.2v1.2h-1.2z M175.0,399.9h1.2v1.2h-1.2z M182.3,399.9h1.2v1.2h-1.2z M189.6,399.9h1.2v1.2h-1.2z M196.9,399.9h1.2v1.2h-1.2z M204.2,399.9h1.2v1.2h-1.2z M211.5,399.9h1.2v1.2h-1.2z M218.8,399.9h1.2v1.2h-1.2z M226.1,399.9h1.2v1.2h-1.2z M233.4,399.9h1.2v1.2h-1.2z M240.7,399.9h1.2v1.2h-1.2z M248.0,399.9h1.2v1.2h-1.2z M255.3,399.9h1.2v1.2h-1.2z M262.6,399.9h1.2v1.2h-1.2z M269.9,399.9h1.2v1.2h-1.2z M277.2,399.9h1.2v1.2h-1.2z M284.5,399.9h1.2v1.2h-1.2z M291.8,399.9h1.2v1.2h-1.2z M299.1,399.9h1.2v1.2h-1.2z M306.4,399.9h1.2v1.2h-1.2z M313.7,399.9h1.2v1.2h-1.2z M321.0,399.9h1.2v1.2h-1.2z M328.3,399.9h1.2v1.2h-1.2z M335.6,399.9h1.2v1.2h-1.2z M342.9,399.9h1.2v1.2h-1.2z M350.2,399.9h1.2v1.2h-1.2z M357.5,399.9h1.2v1.2h-1.2z M364.8,399.9h1.2v1.2h-1.2z M372.1,399.9h1.2v1.2h-1.2z M379.4,399.9h1.2v1.2h-1.2z M386.7,399.9h1.2v1.2h-1.2z M394.0,399.9h1.2v1.2h-1.2z M401.3,399.9h1.2v1.2h-1.2z M408.6,399.9h1.2v1.2h-1.2z M415.9,399.9h1.2v1.2h-1.2z M423.2,399.9h1.2v1.2h-1.2z M430.5,399.9h1.2v1.2h-1.2z M437.8,399.9h1.2v1.2h-1.2z M445.1,399.9h1.2v1.2h-1.2z M452.4,399.9h1.2v1.2h-1.2z M459.7,399.9h1.2v1.2h-1.2z M467.0,399.9h1.2v1.2h-1.2z M474.3,399.9h1.2v1.2h-1.2z M481.6,399.9h1.2v1.2h-1.2z M488.9,399.9h1.2v1.2h-1.2z M496.2,399.9h1.2v1.2h-1.2z M503.5,399.9h1.2v1.2h-1.2z M510.8,399.9h1.2v1.2h-1.2z M518.1,399.9h1.2v1.2h-1.2z M525.4,399.9h1.2v1.2h-1.2z M532.7,399.9h1.2v1.2h-1.2z M540.0,399.9h1.2v1.2h-1.2z M547.3,399.9h1.2v1.2h-1.2z M554.6,399.9h1.2v1.2h-1.2z M561.9,399.9h1.2v1.2h-1.2z M569.2,399.9h1.2v1.2h-1.2z M576.5,399.9h1.2v1.2h-1.2z M583.8,399.9h1.2v1.2h-1.2z M591.1,399.9h1.2v1.2h-1.2z M598.4,399.9h1.2v1.2h-1.2z M605.7,399.9h1.2v1.2h-1.2z M613.0,399.9h1.2v1.2h-1.2z M620.3,399.9h1.2v1.2h-1.2z M627.6,399.9h1.2v1.2h-1.2z M634.9,399.9h1.2v1.2h-1.2z M642.2,399.9h1.2v1.2h-1.2z M649.5,399.9h1.2v1.2h-1.2z M656.8,399.9h1.2v1.2h-1.2z M664.1,399.9h1.2v1.2h-1.2z M671.4,399.9h1.2v1.2h-1.2z M678.7,399.9h1.2v1.2h-1.2z M686.0,399.9h1.2v1.2h-1.2z M693.3,399.9h1.2v1.2h-1.2z M700.6,399.9h1.2v1.2h-1.2z M707.9,399.9h1.2v1.2h-1.2z M715.2,399.9h1.2v1.2h-1.2z M722.5,399.9h1.2v1.2h-1.2z M729.8,399.9h1.2v1.2h-1.2z" fill="#d4d4d4"/>
<polyline points="0.0,102.3 17.5,102.3" fill="none" stroke="#7a7a7a" stroke-width="1.7" stroke-linejoin="round"/><polyline points="51.5,102.3 382.0,102.3" fill="none" stroke="#7a7a7a" stroke-width="1.7" stroke-linejoin="round"/><polyline points="0.0,135.7 382.5,135.7" fill="none" stroke="#7a7a7a" stroke-width="1.7" stroke-linejoin="round"/><polyline points="0.0,168.8 17.0,168.8" fill="none" stroke="#7a7a7a" stroke-width="1.7" stroke-linejoin="round"/><polyline points="66.0,168.8 382.0,168.8" fill="none" stroke="#7a7a7a" stroke-width="1.7" stroke-linejoin="round"/><polyline points="0.0,234.8 382.5,234.8" fill="none" stroke="#b8b6c0" stroke-width="1.8" stroke-linejoin="round"/><polyline points="17.5,102.3 51.5,102.3 51.5,86.0 382.3,86.0 382.3,102.3 731.0,102.3" fill="none" stroke="#a40000" stroke-width="1.8" stroke-linejoin="round"/><polyline points="17.5,119.0 382.5,119.0 382.5,135.7 731.0,135.7" fill="none" stroke="#0626b0" stroke-width="1.8" stroke-linejoin="round"/><polyline points="17.0,168.8 66.0,168.8 66.0,152.5 382.0,152.5 382.5,168.8 731.0,168.8" fill="none" stroke="#a00e8a" stroke-width="1.8" stroke-linejoin="round"/><polyline points="382.6,69.0 382.6,93.7 382.9,95.0 382.9,334.6" fill="none" stroke="#b07a10" stroke-width="1.4" stroke-linejoin="round"/><polyline points="17.5,233.2 52.8,233.2 52.8,60.0 62.0,60.0 63.4,208.5 64.9,144.2 65.3,157.5 67.6,153.9 77.3,153.1 78.3,148.3 81.5,146.6 85.4,145.2 90.5,143.4 95.6,141.7 100.6,140.4 105.7,139.3 109.5,138.6 112.8,138.3 117.9,138.3 121.0,146.2 124.0,150.8 127.1,147.2 132.2,154.9 135.2,153.9 137.4,155.2 139.6,155.6 141.8,155.3 144.0,155.6 146.2,155.7 148.4,155.0 150.6,154.9 152.8,155.9 155.0,155.2 157.2,155.2 159.4,156.1 161.6,155.5 163.8,155.9 166.0,155.5 168.2,155.7 170.4,155.1 172.6,155.7 174.8,155.9 177.0,155.5 179.2,155.8 181.4,155.7 183.6,155.0 185.8,155.8 188.0,155.6 190.2,155.3 192.4,154.9 194.6,155.9 196.8,155.5 199.0,155.8 201.2,156.0 203.4,155.8 205.6,156.0 207.8,155.4 210.0,155.9 212.2,155.4 214.4,156.0 216.6,156.0 218.8,155.0 221.0,155.1 223.2,155.2 225.4,156.1 227.6,155.4 229.8,155.7 232.0,155.3 234.2,155.5 236.4,155.4 238.6,155.3 240.8,155.6 243.0,155.6 245.2,156.0 247.4,155.7 249.6,156.0 251.8,155.9 254.0,156.1 256.2,155.7 258.4,155.1 260.6,155.9 262.8,156.1 265.0,156.0 267.2,155.6 269.4,155.8 271.6,155.2 273.8,155.9 276.0,155.6 278.2,155.2 280.4,155.0 282.6,155.9 284.8,156.1 287.0,155.0 289.2,155.9 291.4,155.4 293.6,155.1 295.8,155.3 298.0,155.8 300.2,155.9 302.4,155.0 304.6,155.6 306.8,155.0 309.0,155.8 311.2,155.3 313.4,156.0 315.6,156.1 317.8,155.5 320.0,156.1 322.2,155.3 324.4,155.0 326.6,155.6 328.8,154.9 331.0,155.1 333.2,155.4 335.4,155.6 337.6,155.1 339.8,155.0 342.0,155.9 344.2,155.3 346.4,156.1 348.6,156.0 350.8,155.4 353.0,155.5 355.2,155.5 357.4,155.7 359.6,155.6 361.8,155.6 364.0,155.6 366.2,156.0 368.4,155.5 370.6,155.4 372.8,155.8 375.0,155.2 377.2,155.3 379.4,156.1 382.6,155.6 382.6,234.8 731.0,234.8" fill="none" stroke="#b2c09a" stroke-width="1.35" stroke-linejoin="round"/><circle cx="153.6" cy="155.7" r="1.5" fill="#f0f4e8"/>
</g></svg>
<div class="t" style="left:2.30px;top:103.38px;font-size:5.72px;line-height:5.72px;color:#cc1010;font-weight:normal;font-family:'Liberation Sans';transform-origin:0 50%;transform:scaleX(0.9259);-webkit-text-stroke:0.22px #cc1010">Eenable-in-a</div>
<div class="t" style="left:2.30px;top:110.28px;font-size:5.72px;line-height:5.72px;color:#cc1010;font-weight:normal;font-family:'Liberation Sans';transform-origin:0 50%;transform:scaleX(0.9259);-webkit-text-stroke:0.22px #cc1010">2 /div</div>
<div class="t" style="left:2.30px;top:119.88px;font-size:5.72px;line-height:5.72px;color:#1a3ad8;font-weight:normal;font-family:'Liberation Sans';transform-origin:0 50%;transform:scaleX(0.9259);-webkit-text-stroke:0.22px #1a3ad8">Eenable-in-b</div>
<div class="t" style="left:2.30px;top:126.88px;font-size:5.72px;line-height:5.72px;color:#1a3ad8;font-weight:normal;font-family:'Liberation Sans';transform-origin:0 50%;transform:scaleX(0.9259);-webkit-text-stroke:0.22px #1a3ad8">2 /div</div>
<div class="t" style="left:2.30px;top:156.28px;font-size:5.72px;line-height:5.72px;color:#b81aa0;font-weight:normal;font-family:'Liberation Sans';transform-origin:0 50%;transform:scaleX(0.9259);-webkit-text-stroke:0.22px #b81aa0">Earc-ok</div>
<div class="t" style="left:2.30px;top:162.88px;font-size:5.72px;line-height:5.72px;color:#b81aa0;font-weight:normal;font-family:'Liberation Sans';transform-origin:0 50%;transform:scaleX(0.9259);-webkit-text-stroke:0.22px #b81aa0">2 /div</div>
<div class="t" style="left:2.30px;top:183.08px;font-size:5.72px;line-height:5.72px;color:#18b0b4;font-weight:normal;font-family:'Liberation Sans';transform-origin:0 50%;transform:scaleX(0.9259);-webkit-text-stroke:0.22px #18b0b4">Eperturb</div>
<div class="t" style="left:2.30px;top:190.38px;font-size:5.72px;line-height:5.72px;color:#18b0b4;font-weight:normal;font-family:'Liberation Sans';transform-origin:0 50%;transform:scaleX(0.9259);-webkit-text-stroke:0.22px #18b0b4">50 /div</div>
<div class="t" style="left:2.30px;top:235.38px;font-size:5.72px;line-height:5.72px;color:#ccd4b0;font-weight:normal;font-family:'Liberation Sans';transform-origin:0 50%;transform:scaleX(0.9259);-webkit-text-stroke:0.22px #ccd4b0">E.feedback</div>
<div class="t" style="left:2.30px;top:242.08px;font-size:5.72px;line-height:5.72px;color:#ccd4b0;font-weight:normal;font-family:'Liberation Sans';transform-origin:0 50%;transform:scaleX(0.9259);-webkit-text-stroke:0.22px #ccd4b0">50 /div</div>
<div class="t" style="left:2.30px;top:269.58px;font-size:5.72px;line-height:5.72px;color:#12a81a;font-weight:normal;font-family:'Liberation Sans';transform-origin:0 50%;transform:scaleX(0.9259);-webkit-text-stroke:0.22px #12a81a">Dbg.holding</div>
<div class="t" style="left:2.30px;top:276.28px;font-size:5.72px;line-height:5.72px;color:#12a81a;font-weight:normal;font-family:'Liberation Sans';transform-origin:0 50%;transform:scaleX(0.9259);-webkit-text-stroke:0.22px #12a81a">2 /div</div>
<div class="t" style="left:2.30px;top:321.68px;font-size:5.72px;line-height:5.72px;color:#c89018;font-weight:normal;font-family:'Liberation Sans';transform-origin:0 50%;transform:scaleX(0.9259);-webkit-text-stroke:0.22px #c89018">Ecurrent-vel</div>
<div class="t" style="left:2.30px;top:328.38px;font-size:5.72px;line-height:5.72px;color:#c89018;font-weight:normal;font-family:'Liberation Sans';transform-origin:0 50%;transform:scaleX(0.9259);-webkit-text-stroke:0.22px #c89018">2 /div</div>
<div class="t" style="left:2.30px;top:369.18px;font-size:5.72px;line-height:5.72px;color:#6a20e0;font-weight:normal;font-family:'Liberation Sans';transform-origin:0 50%;transform:scaleX(0.9259);-webkit-text-stroke:0.22px #6a20e0">Dbg.error</div>
<div class="t" style="left:2.30px;top:375.58px;font-size:5.72px;line-height:5.72px;color:#6a20e0;font-weight:normal;font-family:'Liberation Sans';transform-origin:0 50%;transform:scaleX(0.9259);-webkit-text-stroke:0.22px #6a20e0">2 /div</div>
<div class="t" style="left:733.00px;top:33.40px;font-size:5.40px;line-height:5.40px;color:#525252;font-weight:normal;font-family:'Liberation Sans';transform-origin:0 50%;transform:scaleX(0.9259);">Run Mode</div>
<div class="t" style="left:760.90px;top:33.40px;font-size:5.40px;line-height:5.40px;color:#525252;font-weight:normal;font-family:'Liberation Sans';transform-origin:0 50%;transform:scaleX(0.9259);">Trigger</div>
<svg class="r" style="left:730.80px;top:38.40px" width="10" height="10"><circle cx="5" cy="5" r="2.55" fill="#fafafa" stroke="#bcbcbc" stroke-width="0.8"/></svg>
<div class="t" style="left:741.10px;top:41.05px;font-size:5.40px;line-height:5.40px;color:#525252;font-weight:normal;font-family:'Liberation Sans';transform-origin:0 50%;transform:scaleX(0.9259);">Normal</div>
<svg class="r" style="left:730.80px;top:47.30px" width="10" height="10"><circle cx="5" cy="5" r="2.55" fill="#fafafa" stroke="#bcbcbc" stroke-width="0.8"/></svg>
<div class="t" style="left:741.10px;top:49.95px;font-size:5.40px;line-height:5.40px;color:#525252;font-weight:normal;font-family:'Liberation Sans';transform-origin:0 50%;transform:scaleX(0.9259);">Single</div>
<svg class="r" style="left:730.80px;top:56.30px" width="10" height="10"><circle cx="5" cy="5" r="2.55" fill="#fafafa" stroke="#bcbcbc" stroke-width="0.8"/></svg>
<div class="t" style="left:741.10px;top:58.95px;font-size:5.40px;line-height:5.40px;color:#525252;font-weight:normal;font-family:'Liberation Sans';transform-origin:0 50%;transform:scaleX(0.9259);">Roll</div>
<svg class="r" style="left:730.80px;top:65.40px" width="10" height="10"><circle cx="5" cy="5" r="2.45" fill="#f6f6f6" stroke="#6da050" stroke-width="1.0"/><circle cx="5" cy="5" r="0.9" fill="#cfe3c2"/></svg>
<div class="t" style="left:741.10px;top:68.05px;font-size:5.40px;line-height:5.40px;color:#525252;font-weight:normal;font-family:'Liberation Sans';transform-origin:0 50%;transform:scaleX(0.9259);">Stop</div>
<svg class="r" style="left:758.60px;top:38.40px" width="10" height="10"><circle cx="5" cy="5" r="2.45" fill="#f6f6f6" stroke="#6da050" stroke-width="1.0"/><circle cx="5" cy="5" r="0.9" fill="#cfe3c2"/></svg>
<div class="t" style="left:768.90px;top:41.05px;font-size:5.40px;line-height:5.40px;color:#525252;font-weight:normal;font-family:'Liberation Sans';transform-origin:0 50%;transform:scaleX(0.9259);">Normal</div>
<svg class="r" style="left:758.60px;top:47.30px" width="10" height="10"><circle cx="5" cy="5" r="2.55" fill="#fafafa" stroke="#bcbcbc" stroke-width="0.8"/></svg>
<div class="t" style="left:768.90px;top:49.95px;font-size:5.40px;line-height:5.40px;color:#525252;font-weight:normal;font-family:'Liberation Sans';transform-origin:0 50%;transform:scaleX(0.9259);">Auto</div>
<div class="r" style="left:759.80px;top:58.00px;width:28.20px;height:10.30px;border:0.8px solid #b9b9b9;border-radius:1.5px;background:linear-gradient(#efefef,#e0e0e0);"></div>
<div class="t" style="left:713.90px;width:120px;text-align:center;top:61.20px;font-size:5.40px;line-height:5.40px;color:#525252;font-weight:normal;font-family:'Liberation Sans';transform-origin:50% 50%;transform:scaleX(0.9259);">Force</div>
<div class="t" style="left:760.00px;top:70.40px;font-size:5.40px;line-height:5.40px;color:#525252;font-weight:normal;font-family:'Liberation Sans';transform-origin:0 50%;transform:scaleX(0.9259);">Level</div>
<div class="t" style="left:776.50px;top:70.40px;font-size:5.40px;line-height:5.40px;color:#525252;font-weight:normal;font-family:'Liberation Sans';transform-origin:0 50%;transform:scaleX(0.9259);">Pos</div>
<div class="t" style="left:733.00px;top:76.80px;font-size:5.40px;line-height:5.40px;color:#525252;font-weight:normal;font-family:'Liberation Sans';transform-origin:0 50%;transform:scaleX(0.9259);">Vertical</div>
<div class="t" style="left:733.00px;top:84.20px;font-size:5.40px;line-height:5.40px;color:#525252;font-weight:normal;font-family:'Liberation Sans';transform-origin:0 50%;transform:scaleX(0.9259);">Gain</div>
<div class="t" style="left:748.00px;top:84.20px;font-size:5.40px;line-height:5.40px;color:#525252;font-weight:normal;font-family:'Liberation Sans';transform-origin:0 50%;transform:scaleX(0.9259);">Pos</div>
<div class="r" style="left:737.50px;top:90.50px;width:1.60px;height:165.00px;background:#7aaa5c;border-radius:1px 1px 0 0"></div>
<div class="r" style="left:737.50px;top:255.50px;width:1.60px;height:127.00px;background:#ababab;border-radius:0 0 1px 1px"></div>
<div class="r" style="left:734.90px;top:252.10px;width:6.80px;height:6.80px;border-radius:50%;background:radial-gradient(circle at 50% 45%,#ffffff 40%,#ededed);border:0.7px solid #b4b4b4"></div>
<div class="r" style="left:751.10px;top:90.50px;width:1.60px;height:145.80px;background:#7aaa5c;border-radius:1px 1px 0 0"></div>
<div class="r" style="left:751.10px;top:236.30px;width:1.60px;height:146.20px;background:#ababab;border-radius:0 0 1px 1px"></div>
<div class="r" style="left:748.50px;top:232.90px;width:6.80px;height:6.80px;border-radius:50%;background:radial-gradient(circle at 50% 45%,#ffffff 40%,#ededed);border:0.7px solid #b4b4b4"></div>
<div class="r" style="left:765.40px;top:77.00px;width:1.60px;height:152.10px;background:#7aaa5c;border-radius:1px 1px 0 0"></div>
<div class="r" style="left:765.40px;top:229.10px;width:1.60px;height:153.40px;background:#ababab;border-radius:0 0 1px 1px"></div>
<div class="r" style="left:762.80px;top:225.70px;width:6.80px;height:6.80px;border-radius:50%;background:radial-gradient(circle at 50% 45%,#ffffff 40%,#ededed);border:0.7px solid #b4b4b4"></div>
<div class="r" style="left:778.70px;top:77.00px;width:1.60px;height:152.10px;background:#7aaa5c;border-radius:1px 1px 0 0"></div>
<div class="r" style="left:778.70px;top:229.10px;width:1.60px;height:153.40px;background:#ababab;border-radius:0 0 1px 1px"></div>
<div class="r" style="left:776.10px;top:225.70px;width:6.80px;height:6.80px;border-radius:50%;background:radial-gradient(circle at 50% 45%,#ffffff 40%,#ededed);border:0.7px solid #b4b4b4"></div>
<div class="t" style="left:685.00px;width:120px;text-align:center;top:388.60px;font-size:5.40px;line-height:5.40px;color:#525252;font-weight:normal;font-family:'Liberation Sans';transform-origin:50% 50%;transform:scaleX(0.9259);">Scale</div>
<div class="t" style="left:685.00px;width:120px;text-align:center;top:395.90px;font-size:5.40px;line-height:5.40px;color:#525252;font-weight:normal;font-family:'Liberation Sans';transform-origin:50% 50%;transform:scaleX(0.9259);">50 /div</div>
<div class="t" style="left:712.80px;width:120px;text-align:center;top:388.60px;font-size:5.40px;line-height:5.40px;color:#525252;font-weight:normal;font-family:'Liberation Sans';transform-origin:50% 50%;transform:scaleX(0.9259);">Level</div>
<div class="t" style="left:712.80px;width:120px;text-align:center;top:395.90px;font-size:5.40px;line-height:5.40px;color:#9a9a9a;font-weight:normal;font-family:'Liberation Sans';transform-origin:50% 50%;transform:scaleX(0.9259);">----</div>
<div class="r" style="left:732.90px;top:402.30px;width:24.50px;height:16.60px;border:0.8px solid #b9b9b9;border-radius:1.5px;background:linear-gradient(#efefef,#e0e0e0);"></div>
<div class="t" style="left:685.15px;width:120px;text-align:center;top:405.20px;font-size:5.40px;line-height:5.40px;color:#525252;font-weight:normal;font-family:'Liberation Sans';transform-origin:50% 50%;transform:scaleX(0.9259);">Offset</div>
<div class="t" style="left:685.15px;width:120px;text-align:center;top:411.80px;font-size:5.40px;line-height:5.40px;color:#525252;font-weight:normal;font-family:'Liberation Sans';transform-origin:50% 50%;transform:scaleX(0.9259);">0.000</div>
<div class="r" style="left:732.90px;top:420.60px;width:24.50px;height:10.80px;border:0.8px solid #b9b9b9;border-radius:1.5px;background:linear-gradient(#efefef,#e0e0e0);"></div>
<div class="t" style="left:685.15px;width:120px;text-align:center;top:424.10px;font-size:5.40px;line-height:5.40px;color:#525252;font-weight:normal;font-family:'Liberation Sans';transform-origin:50% 50%;transform:scaleX(0.9259);">Chan Off</div>
<div class="r" style="left:760.30px;top:402.30px;width:25.40px;height:10.00px;border:0.8px solid #b9b9b9;border-radius:1.5px;background:linear-gradient(#efefef,#e0e0e0);"></div>
<div class="t" style="left:713.00px;width:120px;text-align:center;top:405.40px;font-size:5.40px;line-height:5.40px;color:#525252;font-weight:normal;font-family:'Liberation Sans';transform-origin:50% 50%;transform:scaleX(0.9259);">Rising</div>
<div class="r" style="left:760.30px;top:414.00px;width:25.40px;height:17.40px;border:0.8px solid #b9b9b9;border-radius:1.5px;background:linear-gradient(#efefef,#e0e0e0);"></div>
<div class="t" style="left:713.00px;width:120px;text-align:center;top:417.00px;font-size:5.40px;line-height:5.40px;color:#525252;font-weight:normal;font-family:'Liberation Sans';transform-origin:50% 50%;transform:scaleX(0.9259);">Source</div>
<div class="t" style="left:713.00px;width:120px;text-align:center;top:423.80px;font-size:5.40px;line-height:5.40px;color:#525252;font-weight:normal;font-family:'Liberation Sans';transform-origin:50% 50%;transform:scaleX(0.9259);">None</div>
<div class="r" style="left:1.00px;top:401.30px;width:43.90px;height:10.90px;border:0.8px solid #b2b2b2;border-radius:1.5px;background:linear-gradient(#cbcbcb,#c3c3c3)"></div>
<div class="t" style="left:-37.05px;width:120px;text-align:center;top:404.80px;font-size:5.40px;line-height:5.40px;color:#666;font-weight:normal;font-family:'Liberation Sans';transform-origin:50% 50%;transform:scaleX(0.9259);">1</div>
<div class="r" style="left:46.47px;top:401.30px;width:43.90px;height:10.90px;border:0.8px solid #b2b2b2;border-radius:1.5px;background:linear-gradient(#cbcbcb,#c3c3c3)"></div>
<div class="t" style="left:8.42px;width:120px;text-align:center;top:404.80px;font-size:5.40px;line-height:5.40px;color:#666;font-weight:normal;font-family:'Liberation Sans';transform-origin:50% 50%;transform:scaleX(0.9259);">2</div>
<div class="r" style="left:91.94px;top:401.30px;width:43.90px;height:10.90px;border:0.8px solid #b2b2b2;border-radius:1.5px;background:linear-gradient(#cbcbcb,#c3c3c3)"></div>
<div class="t" style="left:53.89px;width:120px;text-align:center;top:404.80px;font-size:5.40px;line-height:5.40px;color:#666;font-weight:normal;font-family:'Liberation Sans';transform-origin:50% 50%;transform:scaleX(0.9259);">3</div>
<div class="r" style="left:137.41px;top:401.30px;width:43.90px;height:10.90px;border:0.8px solid #b2b2b2;border-radius:1.5px;background:linear-gradient(#cbcbcb,#c3c3c3)"></div>
<div class="t" style="left:99.36px;width:120px;text-align:center;top:404.80px;font-size:5.40px;line-height:5.40px;color:#666;font-weight:normal;font-family:'Liberation Sans';transform-origin:50% 50%;transform:scaleX(0.9259);">4</div>
<div class="r" style="left:182.88px;top:401.30px;width:43.90px;height:10.90px;border:0.8px solid #b2b2b2;border-radius:1.5px;background:linear-gradient(#cbcbcb,#c3c3c3)"></div>
<div class="t" style="left:144.83px;width:120px;text-align:center;top:404.80px;font-size:5.40px;line-height:5.40px;color:#666;font-weight:normal;font-family:'Liberation Sans';transform-origin:50% 50%;transform:scaleX(0.9259);">5</div>
<div class="r" style="left:228.35px;top:401.30px;width:43.90px;height:10.90px;border:0.8px solid #b2b2b2;border-radius:1.5px;background:linear-gradient(#cbcbcb,#c3c3c3)"></div>
<div class="t" style="left:190.30px;width:120px;text-align:center;top:404.80px;font-size:5.40px;line-height:5.40px;color:#666;font-weight:normal;font-family:'Liberation Sans';transform-origin:50% 50%;transform:scaleX(0.9259);">6</div>
<div class="r" style="left:273.82px;top:401.30px;width:43.90px;height:10.90px;border:0.8px solid #b2b2b2;border-radius:1.5px;background:linear-gradient(#cbcbcb,#c3c3c3)"></div>
<div class="t" style="left:235.77px;width:120px;text-align:center;top:404.80px;font-size:5.40px;line-height:5.40px;color:#666;font-weight:normal;font-family:'Liberation Sans';transform-origin:50% 50%;transform:scaleX(0.9259);">7</div>
<div class="r" style="left:319.29px;top:401.30px;width:43.90px;height:10.90px;border:0.8px solid #b2b2b2;border-radius:1.5px;background:linear-gradient(#cbcbcb,#c3c3c3)"></div>
<div class="t" style="left:281.24px;width:120px;text-align:center;top:404.80px;font-size:5.40px;line-height:5.40px;color:#666;font-weight:normal;font-family:'Liberation Sans';transform-origin:50% 50%;transform:scaleX(0.9259);">8</div>
<div class="r" style="left:364.76px;top:401.30px;width:43.90px;height:10.90px;border:0.8px solid #bcbcbc;border-radius:1.5px;background:linear-gradient(#f2f2f2,#e2e2e2)"></div>
<div class="t" style="left:326.71px;width:120px;text-align:center;top:404.80px;font-size:5.40px;line-height:5.40px;color:#666;font-weight:normal;font-family:'Liberation Sans';transform-origin:50% 50%;transform:scaleX(0.9259);">9</div>
<div class="r" style="left:410.23px;top:401.30px;width:43.90px;height:10.90px;border:0.8px solid #bcbcbc;border-radius:1.5px;background:linear-gradient(#f2f2f2,#e2e2e2)"></div>
<div class="t" style="left:372.18px;width:120px;text-align:center;top:404.80px;font-size:5.40px;line-height:5.40px;color:#666;font-weight:normal;font-family:'Liberation Sans';transform-origin:50% 50%;transform:scaleX(0.9259);">10</div>
<div class="r" style="left:455.70px;top:401.30px;width:43.90px;height:10.90px;border:0.8px solid #bcbcbc;border-radius:1.5px;background:linear-gradient(#f2f2f2,#e2e2e2)"></div>
<div class="t" style="left:417.65px;width:120px;text-align:center;top:404.80px;font-size:5.40px;line-height:5.40px;color:#666;font-weight:normal;font-family:'Liberation Sans';transform-origin:50% 50%;transform:scaleX(0.9259);">11</div>
<div class="r" style="left:501.17px;top:401.30px;width:43.90px;height:10.90px;border:0.8px solid #bcbcbc;border-radius:1.5px;background:linear-gradient(#f2f2f2,#e2e2e2)"></div>
<div class="t" style="left:463.12px;width:120px;text-align:center;top:404.80px;font-size:5.40px;line-height:5.40px;color:#666;font-weight:normal;font-family:'Liberation Sans';transform-origin:50% 50%;transform:scaleX(0.9259);">12</div>
<div class="r" style="left:546.64px;top:401.30px;width:43.90px;height:10.90px;border:0.8px solid #bcbcbc;border-radius:1.5px;background:linear-gradient(#f2f2f2,#e2e2e2)"></div>
<div class="t" style="left:508.59px;width:120px;text-align:center;top:404.80px;font-size:5.40px;line-height:5.40px;color:#666;font-weight:normal;font-family:'Liberation Sans';transform-origin:50% 50%;transform:scaleX(0.9259);">13</div>
<div class="r" style="left:592.11px;top:401.30px;width:43.90px;height:10.90px;border:0.8px solid #bcbcbc;border-radius:1.5px;background:linear-gradient(#f2f2f2,#e2e2e2)"></div>
<div class="t" style="left:554.06px;width:120px;text-align:center;top:404.80px;font-size:5.40px;line-height:5.40px;color:#666;font-weight:normal;font-family:'Liberation Sans';transform-origin:50% 50%;transform:scaleX(0.9259);">14</div>
<div class="r" style="left:637.58px;top:401.30px;width:43.90px;height:10.90px;border:0.8px solid #bcbcbc;border-radius:1.5px;background:linear-gradient(#f2f2f2,#e2e2e2)"></div>
<div class="t" style="left:599.53px;width:120px;text-align:center;top:404.80px;font-size:5.40px;line-height:5.40px;color:#666;font-weight:normal;font-family:'Liberation Sans';transform-origin:50% 50%;transform:scaleX(0.9259);">15</div>
<div class="r" style="left:683.05px;top:401.30px;width:47.25px;height:10.90px;border:0.8px solid #bcbcbc;border-radius:1.5px;background:linear-gradient(#f2f2f2,#e2e2e2)"></div>
<div class="t" style="left:646.67px;width:120px;text-align:center;top:404.80px;font-size:5.40px;line-height:5.40px;color:#666;font-weight:normal;font-family:'Liberation Sans';transform-origin:50% 50%;transform:scaleX(0.9259);">16</div>
<div class="t" style="left:2.00px;top:414.40px;font-size:5.40px;line-height:5.40px;color:#525252;font-weight:normal;font-family:'Liberation Sans';transform-origin:0 50%;transform:scaleX(0.9259);">Selected Channel</div>
<div class="t" style="left:5.50px;top:423.70px;font-size:5.40px;line-height:5.40px;color:#525252;font-weight:normal;font-family:'Liberation Sans';transform-origin:0 50%;transform:scaleX(0.9259);">3</div>
<div class="r" style="left:16.00px;top:420.20px;width:118.00px;height:10.90px;border:0.8px solid #b9b9b9;border-radius:1.5px;background:linear-gradient(#efefef,#e0e0e0);"></div>
<div class="t" style="left:15.00px;width:120px;text-align:center;top:423.70px;font-size:5.40px;line-height:5.40px;color:#525252;font-weight:normal;font-family:'Liberation Sans';transform-origin:50% 50%;transform:scaleX(0.9259);">E.feedback</div>
<div class="t" style="left:135.70px;top:421.78px;font-size:5.18px;line-height:5.18px;color:#505050;font-weight:normal;font-family:'Liberation Mono';transform-origin:0 50%;transform:scaleX(0.9259);">f(-3.13500) =&nbsp; 120.42037 (ddt -24.80</div>
<div class="r" style="left:0.00px;top:432.30px;width:787.00px;height:10.70px;background:linear-gradient(#dcdcdc,#d4d4d4);border-top:0.6px solid #c8c8c8"></div>
<div class="r" style="left:165.40px;top:433.60px;width:37.80px;height:10.40px;border:0.7px solid #c2c2c2;border-radius:1.2px;background:linear-gradient(#f2f2f2,#e4e4e4)"></div>
<div class="t" style="left:177.70px;top:436.40px;font-size:5.40px;line-height:5.40px;color:#484848;font-weight:normal;font-family:'Liberation Sans';transform-origin:0 50%;transform:scaleX(0.9259);">Terminal</div>
<div class="r" style="left:205.00px;top:433.60px;width:37.80px;height:10.40px;border:0.7px solid #c2c2c2;border-radius:1.2px;background:linear-gradient(#f2f2f2,#e4e4e4)"></div>
<div class="t" style="left:217.30px;top:436.40px;font-size:5.40px;line-height:5.40px;color:#484848;font-weight:normal;font-family:'Liberation Sans';transform-origin:0 50%;transform:scaleX(0.9259);">Pictures</div>
<div class="r" style="left:244.60px;top:433.60px;width:37.80px;height:10.40px;border:0.7px solid #c2c2c2;border-radius:1.2px;background:linear-gradient(#f2f2f2,#e4e4e4)"></div>
<div class="t" style="left:256.90px;top:436.40px;font-size:5.40px;line-height:5.40px;color:#484848;font-weight:normal;font-family:'Liberation Sans';transform-origin:0 50%;transform:scaleX(0.9259);">Reply: - ...</div>
<div class="r" style="left:284.20px;top:433.60px;width:37.80px;height:10.40px;border:0.7px solid #c2c2c2;border-radius:1.2px;background:linear-gradient(#f2f2f2,#e4e4e4)"></div>
<div class="t" style="left:296.50px;top:436.40px;font-size:5.40px;line-height:5.40px;color:#484848;font-weight:normal;font-family:'Liberation Sans';transform-origin:0 50%;transform:scaleX(0.9259);">Rods &quot;S...</div>
<div class="r" style="left:323.80px;top:433.60px;width:37.80px;height:10.40px;border:0.7px solid #c2c2c2;border-radius:1.2px;background:linear-gradient(#f2f2f2,#e4e4e4)"></div>
<div class="t" style="left:336.10px;top:436.40px;font-size:5.40px;line-height:5.40px;color:#484848;font-weight:normal;font-family:'Liberation Sans';transform-origin:0 50%;transform:scaleX(0.9259);">Pictures</div>
<div class="r" style="left:363.40px;top:433.60px;width:37.80px;height:10.40px;border:0.7px solid #c2c2c2;border-radius:1.2px;background:linear-gradient(#f2f2f2,#e4e4e4)"></div>
<div class="t" style="left:375.70px;top:436.40px;font-size:5.40px;line-height:5.40px;color:#484848;font-weight:normal;font-family:'Liberation Sans';transform-origin:0 50%;transform:scaleX(0.9259);">nc_files</div>
<div class="r" style="left:403.00px;top:433.60px;width:37.80px;height:10.40px;border:0.7px solid #c2c2c2;border-radius:1.2px;background:linear-gradient(#f2f2f2,#e4e4e4)"></div>
<div class="t" style="left:415.30px;top:436.40px;font-size:5.40px;line-height:5.40px;color:#484848;font-weight:normal;font-family:'Liberation Sans';transform-origin:0 50%;transform:scaleX(0.9259);">A120 80...</div>
<div class="r" style="left:442.60px;top:433.60px;width:37.80px;height:10.40px;border:0.7px solid #c2c2c2;border-radius:1.2px;background:linear-gradient(#f2f2f2,#e4e4e4)"></div>
<div class="t" style="left:454.90px;top:436.40px;font-size:5.40px;line-height:5.40px;color:#484848;font-weight:normal;font-family:'Liberation Sans';transform-origin:0 50%;transform:scaleX(0.9259);">A120 80...</div>
<div class="r" style="left:482.20px;top:433.60px;width:37.80px;height:10.40px;border:0.7px solid #c2c2c2;border-radius:1.2px;background:linear-gradient(#f2f2f2,#e4e4e4)"></div>
<div class="t" style="left:494.50px;top:436.40px;font-size:5.40px;line-height:5.40px;color:#484848;font-weight:normal;font-family:'Liberation Sans';transform-origin:0 50%;transform:scaleX(0.9259);">PID TUNE</div>
<div class="r" style="left:521.80px;top:433.60px;width:37.80px;height:10.40px;border:0.7px solid #c2c2c2;border-radius:1.2px;background:linear-gradient(#f2f2f2,#e4e4e4)"></div>
<div class="t" style="left:534.10px;top:436.40px;font-size:5.40px;line-height:5.40px;color:#484848;font-weight:normal;font-family:'Liberation Sans';transform-origin:0 50%;transform:scaleX(0.9259);">Experim...</div>
<div class="r" style="left:561.40px;top:433.60px;width:37.80px;height:10.40px;border:0.7px solid #c2c2c2;border-radius:1.2px;background:linear-gradient(#c2c2c2,#cbcbcb)"></div>
<div class="t" style="left:573.70px;top:436.40px;font-size:5.40px;line-height:5.40px;color:#484848;font-weight:normal;font-family:'Liberation Sans';transform-origin:0 50%;transform:scaleX(0.9259);">HAL Osc...</div>
<div class="r" style="left:601.00px;top:433.60px;width:37.80px;height:10.40px;border:0.7px solid #c2c2c2;border-radius:1.2px;background:linear-gradient(#f2f2f2,#e4e4e4)"></div>
<div class="t" style="left:613.30px;top:436.40px;font-size:5.40px;line-height:5.40px;color:#484848;font-weight:normal;font-family:'Liberation Sans';transform-origin:0 50%;transform:scaleX(0.9259);">INI A/V</div>
<div class="r" style="left:640.60px;top:433.60px;width:37.80px;height:10.40px;border:0.7px solid #c2c2c2;border-radius:1.2px;background:linear-gradient(#f2f2f2,#e4e4e4)"></div>
<div class="t" style="left:652.90px;top:436.40px;font-size:5.40px;line-height:5.40px;color:#484848;font-weight:normal;font-family:'Liberation Sans';transform-origin:0 50%;transform:scaleX(0.9259);">HAL Co...</div>
<div class="t" style="left:13.80px;top:436.12px;font-size:5.62px;line-height:5.62px;color:#666;font-weight:normal;font-family:'Liberation Sans';transform-origin:0 50%;transform:scaleX(0.9259);">Menu</div>
<div class="t" style="left:745.00px;top:436.00px;font-size:5.40px;line-height:5.40px;color:#484848;font-weight:normal;font-family:'Liberation Sans';transform-origin:0 50%;transform:scaleX(0.9259);">Sun Feb 10, 15:28</div>
<svg class="r" style="left:0;top:0" width="787" height="443" viewBox="0 0 787 443"><rect x="2.8" y="433.8" width="7.8" height="8.4" rx="2" fill="#9fd67a"/><path d="M4.6,440 v-3.2 h3.6 v3.2 M6.4,436.8 v3.2" stroke="#e8f6e0" stroke-width="0.8" fill="none"/><path d="M30.5,442 L38.5,434.5" stroke="#3a3a3a" stroke-width="2.4"/><path d="M30.5,442 L38.5,434.5" stroke="#8a8a8a" stroke-width="0.6" stroke-dasharray="0.6,0.9"/><circle cx="44.3" cy="438.2" r="3.6" fill="#e8e8e8"/><circle cx="44.3" cy="438.2" r="2.9" fill="#202020"/><circle cx="44.3" cy="438.2" r="1.6" fill="#c05090"/><circle cx="43.6" cy="437.6" r="0.8" fill="#40a0e0"/><circle cx="45" cy="438.8" r="0.8" fill="#f0c020"/><rect x="50.5" y="434.6" width="7" height="6.8" rx="0.6" fill="#dedede" stroke="#b8b8b8" stroke-width="0.5"/><rect x="51.4" y="436.8" width="5.2" height="2.6" fill="#6a9a40"/><rect x="63.5" y="434.3" width="7.5" height="7.5" rx="0.8" fill="#a8a8a8"/><rect x="64.8" y="435.6" width="5" height="2.2" fill="#e8e8e8"/><rect x="64.8" y="438.8" width="5" height="0.7" fill="#d0d0d0"/><rect x="74.6" y="434.5" width="7" height="7" rx="0.5" fill="#1a1a1a"/><path d="M75.6,435.7 l1.3,1 l-1.3,1" stroke="#eee" stroke-width="0.6" fill="none"/><path d="M77.19999999999999,438.1 h1.6" stroke="#ccc" stroke-width="0.5"/><path d="M84.5,434.5 v7" stroke="#c4c4c4" stroke-width="0.6"/><path d="M162.6,434.5 v7" stroke="#c4c4c4" stroke-width="0.6"/><path d="M681.4,434.5 v7" stroke="#c4c4c4" stroke-width="0.6"/><path d="M92.3,438.1 L95.76,436.10 A4.0,4.0 0 0 0 88.84,436.10 Z" fill="#db4437"/><path d="M92.3,438.1 L88.84,436.10 A4.0,4.0 0 0 0 92.30,442.10 Z" fill="#0f9d58"/><path d="M92.3,438.1 L92.30,442.10 A4.0,4.0 0 0 0 95.76,436.10 Z" fill="#f4c400"/><circle cx="92.3" cy="438.1" r="2.00" fill="#fff"/><circle cx="92.3" cy="438.1" r="1.44" fill="#4285f4"/><rect x="169.70000000000002" y="435.3" width="5.6" height="5.6" rx="0.5" fill="#1a1a1a"/><path d="M170.70000000000002,436.5 l1.3,1 l-1.3,1" stroke="#eee" stroke-width="0.6" fill="none"/><path d="M172.3,438.90000000000003 h1.6" stroke="#ccc" stroke-width="0.5"/><rect x="209.3" y="435.90000000000003" width="6" height="5" rx="0.4" fill="#6e6e6e"/><rect x="209.8" y="437.1" width="5" height="3.6" fill="#8a9a7a"/><path d="M251.90000000000003,438.3 L254.67,436.70 A3.2,3.2 0 0 0 249.13,436.70 Z" fill="#db4437"/><path d="M251.90000000000003,438.3 L249.13,436.70 A3.2,3.2 0 0 0 251.90,441.50 Z" fill="#0f9d58"/><path d="M251.90000000000003,438.3 L251.90,441.50 A3.2,3.2 0 0 0 254.67,436.70 Z" fill="#f4c400"/><circle cx="251.90000000000003" cy="438.3" r="1.60" fill="#fff"/><circle cx="251.90000000000003" cy="438.3" r="1.15" fill="#4285f4"/><path d="M291.50000000000006,438.3 L294.27,436.70 A3.2,3.2 0 0 0 288.73,436.70 Z" fill="#db4437"/><path d="M291.50000000000006,438.3 L288.73,436.70 A3.2,3.2 0 0 0 291.50,441.50 Z" fill="#0f9d58"/><path d="M291.50000000000006,438.3 L291.50,441.50 A3.2,3.2 0 0 0 294.27,436.70 Z" fill="#f4c400"/><circle cx="291.50000000000006" cy="438.3" r="1.60" fill="#fff"/><circle cx="291.50000000000006" cy="438.3" r="1.15" fill="#4285f4"/><rect x="328.1" y="435.90000000000003" width="6" height="5" rx="0.4" fill="#6e6e6e"/><rect x="328.6" y="437.1" width="5" height="3.6" fill="#8a9a7a"/><rect x="367.7" y="435.90000000000003" width="6" height="5" rx="0.4" fill="#6e6e6e"/><rect x="368.2" y="437.1" width="5" height="3.6" fill="#78b050"/><rect x="407.3" y="435.3" width="6" height="6" rx="0.6" fill="#4a78b0"/><circle cx="410.3" cy="438.5" r="2.2" fill="#f0c040"/><rect x="446.90000000000003" y="435.3" width="5.6" height="5.6" rx="0.5" fill="#1a1a1a"/><path d="M447.90000000000003,436.5 l1.3,1 l-1.3,1" stroke="#eee" stroke-width="0.6" fill="none"/><path d="M449.50000000000006,438.90000000000003 h1.6" stroke="#ccc" stroke-width="0.5"/><rect x="486.80000000000007" y="435.6" width="5.6" height="4.8" fill="#f4f4f4" stroke="#7090b0" stroke-width="0.6"/><rect x="486.80000000000007" y="435.6" width="5.6" height="1.3" fill="#7898c0"/><rect x="526.4" y="435.6" width="5.6" height="4.8" fill="#f4f4f4" stroke="#7090b0" stroke-width="0.6"/><rect x="526.4" y="435.6" width="5.6" height="1.3" fill="#7898c0"/><rect x="565.9999999999999" y="435.6" width="5.6" height="4.8" fill="#f4f4f4" stroke="#7090b0" stroke-width="0.6"/><rect x="565.9999999999999" y="435.6" width="5.6" height="1.3" fill="#7898c0"/><rect x="605.5999999999999" y="435.6" width="5.6" height="4.8" fill="#f4f4f4" stroke="#7090b0" stroke-width="0.6"/><rect x="605.5999999999999" y="435.6" width="5.6" height="1.3" fill="#7898c0"/><rect x="645.1999999999999" y="435.6" width="5.6" height="4.8" fill="#f4f4f4" stroke="#7090b0" stroke-width="0.6"/><rect x="645.1999999999999" y="435.6" width="5.6" height="1.3" fill="#7898c0"/><path d="M688,433.8 a3.5,3.5 0 1 1 -0.01,0 z" fill="#0f9d58"/><path d="M686.5,442.2 l1.5,-1.6 h1 z" fill="#0f9d58"/><text x="688" y="439.8" font-size="5" font-family="Liberation Sans" font-weight="bold" fill="#fff" text-anchor="middle">1</text><path d="M697,437.8 L700.20,435.95 A3.7,3.7 0 0 0 693.80,435.95 Z" fill="#db4437"/><path d="M697,437.8 L693.80,435.95 A3.7,3.7 0 0 0 697.00,441.50 Z" fill="#0f9d58"/><path d="M697,437.8 L697.00,441.50 A3.7,3.7 0 0 0 700.20,435.95 Z" fill="#f4c400"/><circle cx="697" cy="437.8" r="1.85" fill="#fff"/><circle cx="697" cy="437.8" r="1.33" fill="#4285f4"/><circle cx="707" cy="437.8" r="3" fill="#d0d8e8"/><circle cx="707" cy="437.8" r="2.3" fill="#3a6ab0"/><rect x="706.6" y="436.2" width="0.9" height="3.2" fill="#fff"/><rect x="713.2" y="434" width="3.6" height="3.6" fill="#f0c020"/><rect x="717.2" y="434" width="3.6" height="3.6" fill="#e8e8e8"/><rect x="713.2" y="438" width="3.6" height="3.6" fill="#f4f4f4"/><rect x="717.2" y="438" width="3.6" height="3.6" fill="#3070c0"/><path d="M724.5,436.8 h1.2 l1.6,-1.5 v5 l-1.6,-1.5 h-1.2 z" fill="#303030"/><path d="M728.6,435.8 q1.2,2 0,4" stroke="#505050" stroke-width="0.6" fill="none"/><path d="M729.8,435 q1.8,2.8 0,5.6" stroke="#606060" stroke-width="0.6" fill="none"/><path d="M735.5,441 h5.5 v-6 z" fill="#d0d0d0"/><path d="M736,441 v-1 M737.5,441 v-2 M739,441 v-3 M740.5,441 v-4.5" stroke="#555" stroke-width="0.8"/></svg>
</body></html>
